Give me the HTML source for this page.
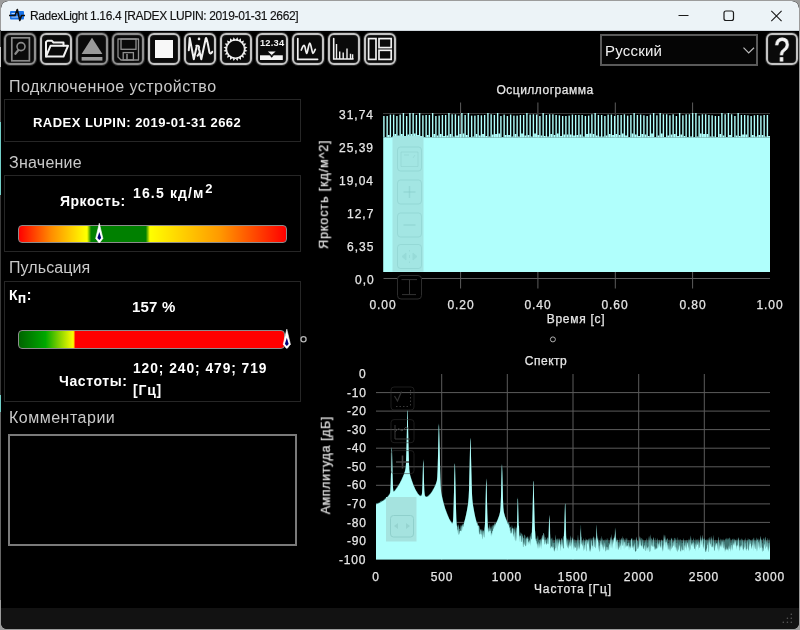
<!DOCTYPE html><html><head><meta charset="utf-8"><style>
*{margin:0;padding:0;box-sizing:border-box}
html,body{width:800px;height:630px;overflow:hidden;background:#9c9c9c;font-family:"Liberation Sans",sans-serif;-webkit-font-smoothing:antialiased}
#win div{will-change:transform}
#win{position:absolute;left:1px;top:1px;width:798px;height:627.5px;background:#000;border-radius:7px 7px 6px 6px;overflow:hidden}
#title{position:absolute;left:0;top:0;width:798px;height:30px;background:#ebf3f8}
.btn{position:absolute;top:33px;width:32px;height:32px;border:2px solid #c4c4c4;border-radius:6px;background:#0a0a0a;box-shadow:0 0 0 1px #2a2a2a, inset 0 0 0 1px #1e1e1e}
.btn.dis{border-color:#8f8f8f}
.box{position:absolute;border:1px solid #262626}
svg{position:absolute;left:0;top:0}
</style></head><body><div style="position:absolute;left:0;top:30px;width:1px;height:17px;background:#444"></div><div style="position:absolute;left:0;top:47px;width:1px;height:20px;background:#c8c8c8"></div><div style="position:absolute;left:0;top:67px;width:1px;height:55px;background:#555"></div><div style="position:absolute;left:0;top:122px;width:1px;height:73px;background:#72cfc8"></div><div style="position:absolute;left:0;top:195px;width:1px;height:200px;background:#3a3a3a"></div><div style="position:absolute;left:0;top:395px;width:1px;height:17px;background:#72cfc8"></div><div style="position:absolute;left:0;top:412px;width:1px;height:188px;background:#666"></div><div id="win">
<div style="position:absolute;left:-1px;top:-1px;width:800px;height:630px">
<div style="position:absolute;left:1px;top:1px;width:798px;height:30px;background:#ecf3f7;border-radius:7px 7px 0 0"></div>
<div style="position:absolute;left:1px;top:30px;width:798px;height:1px;background:#cfd6dc"></div>
<svg width="800" height="40" style="position:absolute;left:0;top:0">
<rect x="10" y="11" width="14" height="8.5" rx="1" fill="#1a73e8"/>
<rect x="11.5" y="13" width="5" height="1" fill="#bcd8ff"/>
<rect x="11.5" y="16.5" width="8" height="1" fill="#bcd8ff"/>
<polyline points="9,15.5 15,15.5 17.3,9.5 19.8,20.5 21.5,15.5 25,15.5" fill="none" stroke="#111" stroke-width="1.6" stroke-linejoin="round"/>
<line x1="678.5" y1="15.5" x2="688.5" y2="15.5" stroke="#1b1b1b" stroke-width="1"/>
<rect x="724" y="11" width="9.5" height="9.5" rx="2" fill="none" stroke="#1b1b1b" stroke-width="1.2"/>
<path d="M771.3 10.9 L781.6 21.1 M781.6 10.9 L771.3 21.1" stroke="#1b1b1b" stroke-width="1.1"/>
</svg>
<div style="position:absolute;top:9.74px;font-size:12px;line-height:12px;color:#111;font-weight:normal;letter-spacing:-0.36px;white-space:nowrap;-webkit-text-stroke:0.15px #111;left:29.6px">RadexLight 1.16.4 [RADEX LUPIN: 2019-01-31 2662]</div>
<div class="btn dis" style="left:4px"></div>
<div class="btn" style="left:40px"></div>
<div class="btn dis" style="left:76px"></div>
<div class="btn dis" style="left:112px"></div>
<div class="btn" style="left:148px"></div>
<div class="btn" style="left:184px"></div>
<div class="btn" style="left:220px"></div>
<div class="btn" style="left:256px"></div>
<div class="btn" style="left:292px"></div>
<div class="btn" style="left:328px"></div>
<div class="btn" style="left:364px"></div>
<svg width="800" height="70" style="position:absolute;left:0;top:0" fill="none" stroke-linecap="round">
<!-- 1 search doc -->
<rect x="11.8" y="37.8" width="17.6" height="23" stroke="#8a8a8a" stroke-width="1.7"/>
<circle cx="21" cy="46.6" r="4" stroke="#8a8a8a" stroke-width="1.6"/>
<line x1="15.4" y1="53.8" x2="18.2" y2="50.2" stroke="#8a8a8a" stroke-width="2.2"/>
<!-- 2 folder -->
<path d="M46 56.5 L46 42 L47.5 40.8 L52 40.8 L53.5 42.5 L63.5 42.5 L63.5 45.5" stroke="#f2f2f2" stroke-width="2" stroke-linejoin="round"/>
<path d="M46 56.5 L50.5 45.8 L68 45.8 L63.5 56.5 Z" stroke="#f2f2f2" stroke-width="2" stroke-linejoin="round"/>
<!-- 3 eject -->
<path d="M92 37.8 L102.4 54 L81.6 54 Z" fill="#9a9a9a"/>
<rect x="81.6" y="57" width="20.8" height="3.6" fill="#9a9a9a"/>
<!-- 4 floppy -->
<path d="M118 39 L138.5 39 L138.5 60 L121 60 L118 57 Z" stroke="#8f8f8f" stroke-width="1.3" stroke-linejoin="round"/>
<rect x="121" y="39" width="15" height="10.3" stroke="#8f8f8f" stroke-width="1.3"/>
<rect x="123.2" y="52.6" width="10.2" height="7.4" stroke="#8f8f8f" stroke-width="1.3"/>
<line x1="127" y1="54.5" x2="127" y2="60" stroke="#8f8f8f" stroke-width="1.5"/>
<!-- 5 stop -->
<rect x="155" y="40" width="18" height="18" fill="#f8f8f8"/>
<!-- 6 wave -->
<path d="M188.8 50.3 L189.7 38 L193.8 59.3 L196.6 47 M196.3 45.8 Q200.2 45 198.7 49.2 Q201.2 52.2 197.6 55.8 M199.6 52 L201.3 59.3 L205.8 38.3 C206.6 36.5 208.3 46 209.4 52.3 C209.9 54 211.4 53.8 212.2 51.8" stroke="#f0f0f0" stroke-width="2" stroke-linejoin="round"/>
<circle cx="199" cy="38.9" r="1.3" fill="#f0f0f0"/>
<!-- 7 sun -->
<circle cx="235.5" cy="49.1" r="9.1" fill="#0a0a0a" stroke="#f0f0f0" stroke-width="1.5"/>
<polygon points="244.80,49.07 247.45,50.99 244.34,52.00" fill="#f0f0f0"/><polygon points="244.35,51.95 246.28,54.59 243.01,54.59" fill="#f0f0f0"/><polygon points="243.04,54.54 244.06,57.66 240.94,56.64" fill="#f0f0f0"/><polygon points="240.99,56.61 240.99,59.88 238.35,57.95" fill="#f0f0f0"/><polygon points="238.40,57.94 237.39,61.05 235.47,58.40" fill="#f0f0f0"/><polygon points="235.53,58.40 233.61,61.05 232.60,57.94" fill="#f0f0f0"/><polygon points="232.65,57.95 230.01,59.88 230.01,56.61" fill="#f0f0f0"/><polygon points="230.06,56.64 226.94,57.66 227.96,54.54" fill="#f0f0f0"/><polygon points="227.99,54.59 224.72,54.59 226.65,51.95" fill="#f0f0f0"/><polygon points="226.66,52.00 223.55,50.99 226.20,49.07" fill="#f0f0f0"/><polygon points="226.20,49.13 223.55,47.21 226.66,46.20" fill="#f0f0f0"/><polygon points="226.65,46.25 224.72,43.61 227.99,43.61" fill="#f0f0f0"/><polygon points="227.96,43.66 226.94,40.54 230.06,41.56" fill="#f0f0f0"/><polygon points="230.01,41.59 230.01,38.32 232.65,40.25" fill="#f0f0f0"/><polygon points="232.60,40.26 233.61,37.15 235.53,39.80" fill="#f0f0f0"/><polygon points="235.47,39.80 237.39,37.15 238.40,40.26" fill="#f0f0f0"/><polygon points="238.35,40.25 240.99,38.32 240.99,41.59" fill="#f0f0f0"/><polygon points="240.94,41.56 244.06,40.54 243.04,43.66" fill="#f0f0f0"/><polygon points="243.01,43.61 246.28,43.61 244.35,46.25" fill="#f0f0f0"/><polygon points="244.34,46.20 247.45,47.21 244.80,49.13" fill="#f0f0f0"/>
<!-- 8 12.34 -->
<rect x="260" y="55.3" width="22.8" height="4.7" fill="#f4f4f4"/>
<path d="M267.8 51.6 L275.6 51.6 L271.7 54.9 Z" fill="#f4f4f4"/>
<path d="M269.6 55.3 L273.8 55.3 L271.7 57.8 Z" fill="#000"/>
<!-- 9 osc -->
<path d="M297.8 38.6 L297.8 59.3 L317.6 59.3" stroke="#f0f0f0" stroke-width="1.7"/>
<path d="M301.3 50 C302.5 47 303.5 44.5 304.5 45.8 C305.5 47 305.8 53.5 306.7 53.4 C307.8 53 308.5 43 309.8 43 C311 43 312 53.4 313 53.4 C314 53.4 314.6 50 315.3 49.3" stroke="#f0f0f0" stroke-width="1.7"/>
<!-- 10 bars -->
<path d="M333.7 38.5 L333.7 59 L353 59" stroke="#f0f0f0" stroke-width="1.6"/>
<path d="M336.5 59 L336.5 44 M339.7 59 L339.7 51.6 M343.2 59 L343.2 52.5 M347 59 L347 48.5 M350.5 59 L350.5 53.8 M352.6 59 L352.6 54.2" stroke="#f0f0f0" stroke-width="1.4" stroke-linecap="butt"/>
<!-- 11 layout -->
<rect x="368.6" y="38.6" width="7.4" height="20.8" stroke="#f0f0f0" stroke-width="1.7"/>
<rect x="379" y="38.6" width="12.2" height="9" stroke="#f0f0f0" stroke-width="1.7"/>
<rect x="379" y="50.3" width="12.2" height="9.1" stroke="#f0f0f0" stroke-width="1.7"/>
</svg>
<div style="position:absolute;top:38.53px;font-size:9.3px;line-height:9.3px;color:#f4f4f4;font-weight:bold;letter-spacing:0.2px;white-space:nowrap;left:260px">12.34</div>
<div style="position:absolute;left:600px;top:33.5px;width:158px;height:31.5px;border:2px solid #5a5a5a;background:#050505"></div>
<div style="position:absolute;top:42.70px;font-size:15px;line-height:15px;color:#f2f2f2;font-weight:normal;letter-spacing:0.2px;white-space:nowrap;left:605.2px">Русский</div>
<svg width="800" height="70" style="position:absolute;left:0;top:0"><path d="M743.5 47.7 L748.7 52.9 L754 47.7" fill="none" stroke="#bbb" stroke-width="1.2"/></svg>
<div class="btn" style="left:766px;width:32px"></div>
<div style="position:absolute;top:32.42px;font-size:34px;line-height:34px;color:#f4f4f4;font-weight:normal;letter-spacing:0px;white-space:nowrap;-webkit-text-stroke:0.9px #f4f4f4;transform:scaleX(0.8);left:481.79999999999995px;width:600px;text-align:center">?</div>
<div style="position:absolute;top:78.76px;font-size:16px;line-height:16px;color:#c9c9c9;font-weight:normal;letter-spacing:0.45px;white-space:nowrap;left:9px">Подключенное устройство</div>
<div class="box" style="left:4px;top:99px;width:297px;height:43px"></div>
<div style="position:absolute;top:115.70px;font-size:13px;line-height:13px;color:#fff;font-weight:bold;letter-spacing:0.47px;white-space:nowrap;left:33px">RADEX LUPIN: 2019-01-31 2662</div>
<div style="position:absolute;top:154.66px;font-size:16px;line-height:16px;color:#c9c9c9;font-weight:normal;letter-spacing:0.25px;white-space:nowrap;left:9px">Значение</div>
<div class="box" style="left:4px;top:175px;width:297px;height:77px"></div>
<div style="position:absolute;top:193.65px;font-size:14px;line-height:14px;color:#fff;font-weight:bold;letter-spacing:0.5px;white-space:nowrap;left:60.3px">Яркость:</div>
<div style="position:absolute;top:186.35px;font-size:14px;line-height:14px;color:#fff;font-weight:bold;letter-spacing:1.15px;white-space:nowrap;left:132.6px">16.5 кд/м<span style='position:relative;top:-5.5px;font-size:13px;margin-left:0.5px'>2</span></div>
<div style="position:absolute;left:17.5px;top:225px;width:269px;height:18px;border:1.5px solid #8c8c8c;border-radius:4px;background:linear-gradient(to right,#ff0000 0%,#ff8c00 12%,#ffff00 25%,#ffff00 25.5%,#008000 27%,#008000 47.5%,#ffff00 49%,#ff9a00 75%,#ff0000 100%)"></div>
<svg width="800" height="630"><path d="M99.3 223.3 L102.89999999999999 238.4 L99.89999999999999 242.4 L98.7 242.4 L95.7 238.4 Z" fill="#fff" stroke="#fff" stroke-width="0.6" stroke-linejoin="round"/><path d="M99.3 231.9 L101.2 238.1 L99.3 240.1 L97.39999999999999 238.1 Z" fill="#00007a"/></svg>
<div style="position:absolute;top:260.46px;font-size:16px;line-height:16px;color:#c9c9c9;font-weight:normal;letter-spacing:0.1px;white-space:nowrap;left:9px">Пульсация</div>
<div class="box" style="left:4px;top:281px;width:297px;height:121px"></div>
<div style="position:absolute;top:288.15px;font-size:14px;line-height:14px;color:#fff;font-weight:bold;letter-spacing:0.3px;white-space:nowrap;left:9px">К<span style='position:relative;top:3px'>п</span>:</div>
<div style="position:absolute;top:298.80px;font-size:15px;line-height:15px;color:#fff;font-weight:bold;letter-spacing:0.2px;white-space:nowrap;left:132.3px">157 %</div>
<div style="position:absolute;left:17.5px;top:330px;width:267px;height:18.5px;border:1.5px solid #8c8c8c;border-radius:4px;background:linear-gradient(to right,#006400 0%,#00a800 10%,#7fd000 15%,#ffff00 20.5%,#ff0000 21.3%,#ff0000 100%)"></div>
<svg width="800" height="630"><path d="M286.8 329.2 L290.40000000000003 344.2 L287.40000000000003 348.2 L286.2 348.2 L283.2 344.2 Z" fill="#fff" stroke="#fff" stroke-width="0.6" stroke-linejoin="round"/><path d="M286.8 337.8 L288.7 343.9 L286.8 345.9 L284.90000000000003 343.9 Z" fill="#00007a"/><circle cx="303.5" cy="339.3" r="2.6" fill="none" stroke="#b5b5b5" stroke-width="1.3"/></svg>
<div style="position:absolute;top:373.65px;font-size:14px;line-height:14px;color:#fff;font-weight:bold;letter-spacing:0.6px;white-space:nowrap;left:59px">Частоты:</div>
<div style="position:absolute;top:362.32px;font-size:13.8px;line-height:13.8px;color:#fff;font-weight:bold;letter-spacing:0.95px;white-space:nowrap;left:132.5px">120; 240; 479; 719</div>
<div style="position:absolute;top:383.15px;font-size:14px;line-height:14px;color:#fff;font-weight:bold;letter-spacing:0.8px;white-space:nowrap;left:132.5px">[Гц]</div>
<div style="position:absolute;top:409.96px;font-size:16px;line-height:16px;color:#c9c9c9;font-weight:normal;letter-spacing:0.5px;white-space:nowrap;left:9px">Комментарии</div>
<div style="position:absolute;left:8px;top:434px;width:289px;height:112px;border:2px solid #7a7a7a"></div>
<div style="position:absolute;left:1px;top:607.5px;width:798px;height:22px;background:#121212"></div>
<svg width="800" height="630"><circle cx="791.3" cy="614.3" r="0.8" fill="#5a5a5a"/><circle cx="787.4" cy="618.3" r="0.8" fill="#5a5a5a"/><circle cx="791.3" cy="618.3" r="0.8" fill="#5a5a5a"/><circle cx="783.3" cy="622.2" r="0.8" fill="#5a5a5a"/><circle cx="787.4" cy="622.2" r="0.8" fill="#5a5a5a"/><circle cx="791.3" cy="622.2" r="0.8" fill="#5a5a5a"/></svg>
<div style="position:absolute;top:84.09px;font-size:12px;line-height:12px;color:#e6e6e6;font-weight:normal;letter-spacing:0.5px;white-space:nowrap;-webkit-text-stroke:0.25px #e6e6e6;left:245.39999999999998px;width:600px;text-align:center">Осциллограмма</div>
<div style="position:absolute;top:108.99px;font-size:12px;line-height:12px;color:#e6e6e6;font-weight:normal;letter-spacing:1.0px;white-space:nowrap;-webkit-text-stroke:0.25px #e6e6e6;right:425.5px">31,74</div>
<div style="position:absolute;top:141.96px;font-size:12px;line-height:12px;color:#e6e6e6;font-weight:normal;letter-spacing:1.0px;white-space:nowrap;-webkit-text-stroke:0.25px #e6e6e6;right:425.5px">25,39</div>
<div style="position:absolute;top:174.93px;font-size:12px;line-height:12px;color:#e6e6e6;font-weight:normal;letter-spacing:1.0px;white-space:nowrap;-webkit-text-stroke:0.25px #e6e6e6;right:425.5px">19,04</div>
<div style="position:absolute;top:207.90px;font-size:12px;line-height:12px;color:#e6e6e6;font-weight:normal;letter-spacing:1.0px;white-space:nowrap;-webkit-text-stroke:0.25px #e6e6e6;right:425.5px">12,7</div>
<div style="position:absolute;top:240.87px;font-size:12px;line-height:12px;color:#e6e6e6;font-weight:normal;letter-spacing:1.0px;white-space:nowrap;-webkit-text-stroke:0.25px #e6e6e6;right:425.5px">6,35</div>
<div style="position:absolute;top:273.84px;font-size:12px;line-height:12px;color:#e6e6e6;font-weight:normal;letter-spacing:1.0px;white-space:nowrap;-webkit-text-stroke:0.25px #e6e6e6;right:425.5px">0,0</div>
<div style="position:absolute;top:298.84px;font-size:12px;line-height:12px;color:#e6e6e6;font-weight:normal;letter-spacing:0.9px;white-space:nowrap;-webkit-text-stroke:0.25px #e6e6e6;left:83.19999999999999px;width:600px;text-align:center">0.00</div>
<div style="position:absolute;top:298.84px;font-size:12px;line-height:12px;color:#e6e6e6;font-weight:normal;letter-spacing:0.9px;white-space:nowrap;-webkit-text-stroke:0.25px #e6e6e6;left:160.56px;width:600px;text-align:center">0.20</div>
<div style="position:absolute;top:298.84px;font-size:12px;line-height:12px;color:#e6e6e6;font-weight:normal;letter-spacing:0.9px;white-space:nowrap;-webkit-text-stroke:0.25px #e6e6e6;left:237.91999999999996px;width:600px;text-align:center">0.40</div>
<div style="position:absolute;top:298.84px;font-size:12px;line-height:12px;color:#e6e6e6;font-weight:normal;letter-spacing:0.9px;white-space:nowrap;-webkit-text-stroke:0.25px #e6e6e6;left:315.28px;width:600px;text-align:center">0.60</div>
<div style="position:absolute;top:298.84px;font-size:12px;line-height:12px;color:#e6e6e6;font-weight:normal;letter-spacing:0.9px;white-space:nowrap;-webkit-text-stroke:0.25px #e6e6e6;left:392.64px;width:600px;text-align:center">0.80</div>
<div style="position:absolute;top:298.84px;font-size:12px;line-height:12px;color:#e6e6e6;font-weight:normal;letter-spacing:0.9px;white-space:nowrap;-webkit-text-stroke:0.25px #e6e6e6;left:470.0px;width:600px;text-align:center">1.00</div>
<div style="position:absolute;top:312.64px;font-size:12px;line-height:12px;color:#e6e6e6;font-weight:normal;letter-spacing:0.72px;white-space:nowrap;-webkit-text-stroke:0.25px #e6e6e6;left:275.70000000000005px;width:600px;text-align:center">Время [с]</div>
<div style="position:absolute;top:188.42px;font-size:12.5px;line-height:12.5px;color:#e6e6e6;font-weight:normal;letter-spacing:0.9px;white-space:nowrap;-webkit-text-stroke:0.25px #e6e6e6;transform:rotate(-90deg);transform-origin:300px 50%;left:23.600000000000023px;width:600px;text-align:center">Яркость [кд/м^2]</div>
<div style="position:absolute;top:354.64px;font-size:12px;line-height:12px;color:#e6e6e6;font-weight:normal;letter-spacing:0.5px;white-space:nowrap;-webkit-text-stroke:0.25px #e6e6e6;left:245.75px;width:600px;text-align:center">Спектр</div>
<div style="position:absolute;top:368.14px;font-size:12px;line-height:12px;color:#e6e6e6;font-weight:normal;letter-spacing:0.8px;white-space:nowrap;-webkit-text-stroke:0.25px #e6e6e6;right:433.5px">0</div>
<div style="position:absolute;top:386.69px;font-size:12px;line-height:12px;color:#e6e6e6;font-weight:normal;letter-spacing:0.8px;white-space:nowrap;-webkit-text-stroke:0.25px #e6e6e6;right:433.5px">-10</div>
<div style="position:absolute;top:405.24px;font-size:12px;line-height:12px;color:#e6e6e6;font-weight:normal;letter-spacing:0.8px;white-space:nowrap;-webkit-text-stroke:0.25px #e6e6e6;right:433.5px">-20</div>
<div style="position:absolute;top:423.79px;font-size:12px;line-height:12px;color:#e6e6e6;font-weight:normal;letter-spacing:0.8px;white-space:nowrap;-webkit-text-stroke:0.25px #e6e6e6;right:433.5px">-30</div>
<div style="position:absolute;top:442.34px;font-size:12px;line-height:12px;color:#e6e6e6;font-weight:normal;letter-spacing:0.8px;white-space:nowrap;-webkit-text-stroke:0.25px #e6e6e6;right:433.5px">-40</div>
<div style="position:absolute;top:460.89px;font-size:12px;line-height:12px;color:#e6e6e6;font-weight:normal;letter-spacing:0.8px;white-space:nowrap;-webkit-text-stroke:0.25px #e6e6e6;right:433.5px">-50</div>
<div style="position:absolute;top:479.44px;font-size:12px;line-height:12px;color:#e6e6e6;font-weight:normal;letter-spacing:0.8px;white-space:nowrap;-webkit-text-stroke:0.25px #e6e6e6;right:433.5px">-60</div>
<div style="position:absolute;top:497.99px;font-size:12px;line-height:12px;color:#e6e6e6;font-weight:normal;letter-spacing:0.8px;white-space:nowrap;-webkit-text-stroke:0.25px #e6e6e6;right:433.5px">-70</div>
<div style="position:absolute;top:516.54px;font-size:12px;line-height:12px;color:#e6e6e6;font-weight:normal;letter-spacing:0.8px;white-space:nowrap;-webkit-text-stroke:0.25px #e6e6e6;right:433.5px">-80</div>
<div style="position:absolute;top:535.09px;font-size:12px;line-height:12px;color:#e6e6e6;font-weight:normal;letter-spacing:0.8px;white-space:nowrap;-webkit-text-stroke:0.25px #e6e6e6;right:433.5px">-90</div>
<div style="position:absolute;top:553.64px;font-size:12px;line-height:12px;color:#e6e6e6;font-weight:normal;letter-spacing:0.8px;white-space:nowrap;-webkit-text-stroke:0.25px #e6e6e6;right:433.5px">-100</div>
<div style="position:absolute;top:570.84px;font-size:12px;line-height:12px;color:#e6e6e6;font-weight:normal;letter-spacing:0.9px;white-space:nowrap;-webkit-text-stroke:0.25px #e6e6e6;left:76.0px;width:600px;text-align:center">0</div>
<div style="position:absolute;top:570.84px;font-size:12px;line-height:12px;color:#e6e6e6;font-weight:normal;letter-spacing:0.9px;white-space:nowrap;-webkit-text-stroke:0.25px #e6e6e6;left:141.66666666666669px;width:600px;text-align:center">500</div>
<div style="position:absolute;top:570.84px;font-size:12px;line-height:12px;color:#e6e6e6;font-weight:normal;letter-spacing:0.9px;white-space:nowrap;-webkit-text-stroke:0.25px #e6e6e6;left:207.33333333333337px;width:600px;text-align:center">1000</div>
<div style="position:absolute;top:570.84px;font-size:12px;line-height:12px;color:#e6e6e6;font-weight:normal;letter-spacing:0.9px;white-space:nowrap;-webkit-text-stroke:0.25px #e6e6e6;left:273.0px;width:600px;text-align:center">1500</div>
<div style="position:absolute;top:570.84px;font-size:12px;line-height:12px;color:#e6e6e6;font-weight:normal;letter-spacing:0.9px;white-space:nowrap;-webkit-text-stroke:0.25px #e6e6e6;left:338.66666666666674px;width:600px;text-align:center">2000</div>
<div style="position:absolute;top:570.84px;font-size:12px;line-height:12px;color:#e6e6e6;font-weight:normal;letter-spacing:0.9px;white-space:nowrap;-webkit-text-stroke:0.25px #e6e6e6;left:404.33333333333326px;width:600px;text-align:center">2500</div>
<div style="position:absolute;top:570.84px;font-size:12px;line-height:12px;color:#e6e6e6;font-weight:normal;letter-spacing:0.9px;white-space:nowrap;-webkit-text-stroke:0.25px #e6e6e6;left:470.0px;width:600px;text-align:center">3000</div>
<div style="position:absolute;top:583.44px;font-size:12px;line-height:12px;color:#e6e6e6;font-weight:normal;letter-spacing:0.84px;white-space:nowrap;-webkit-text-stroke:0.25px #e6e6e6;left:273px;width:600px;text-align:center">Частота [Гц]</div>
<div style="position:absolute;top:459.02px;font-size:12.5px;line-height:12.5px;color:#e6e6e6;font-weight:normal;letter-spacing:0.6px;white-space:nowrap;-webkit-text-stroke:0.25px #e6e6e6;transform:rotate(-90deg);transform-origin:300px 50%;left:26px;width:600px;text-align:center">Амплитуда [дБ]</div>
<svg width="800" height="630" style="position:absolute;left:0;top:0"><line x1="460.6" y1="102.5" x2="460.6" y2="288.5" stroke="#5c5c5c" stroke-width="1"/><line x1="537.9" y1="102.5" x2="537.9" y2="288.5" stroke="#5c5c5c" stroke-width="1"/><line x1="615.3" y1="102.5" x2="615.3" y2="288.5" stroke="#5c5c5c" stroke-width="1"/><line x1="692.6" y1="102.5" x2="692.6" y2="288.5" stroke="#5c5c5c" stroke-width="1"/><line x1="383" y1="113.5" x2="770" y2="113.5" stroke="#3a3a3a" stroke-width="1"/><line x1="383.5" y1="278.5" x2="770" y2="278.5" stroke="#5c5c5c" stroke-width="1"/><rect x="383.2" y="137.5" width="386.8" height="134.5" fill="#b0fffc"/><rect x="383.20" y="116.0" width="1.4" height="21.6" fill="#b0fffc"/><rect x="384.60" y="137.0" width="1.85" height="0.6" fill="#b0fffc"/><rect x="386.45" y="116.0" width="1.4" height="21.6" fill="#b0fffc"/><rect x="387.85" y="135.0" width="1.85" height="2.6" fill="#b0fffc"/><rect x="389.70" y="114.6" width="1.4" height="23.0" fill="#b0fffc"/><rect x="391.10" y="137.0" width="1.85" height="0.6" fill="#b0fffc"/><rect x="392.95" y="114.6" width="1.4" height="23.0" fill="#b0fffc"/><rect x="394.35" y="134.0" width="1.85" height="3.6" fill="#b0fffc"/><rect x="396.20" y="116.0" width="1.4" height="21.6" fill="#b0fffc"/><rect x="397.60" y="135.5" width="1.85" height="2.1" fill="#b0fffc"/><rect x="399.45" y="114.6" width="1.4" height="23.0" fill="#b0fffc"/><rect x="400.85" y="134.0" width="1.85" height="3.6" fill="#b0fffc"/><rect x="402.70" y="113.0" width="1.4" height="24.6" fill="#b0fffc"/><rect x="404.10" y="136.5" width="1.85" height="1.1" fill="#b0fffc"/><rect x="405.95" y="116.0" width="1.4" height="21.6" fill="#b0fffc"/><rect x="407.35" y="134.5" width="1.85" height="3.1" fill="#b0fffc"/><rect x="409.20" y="113.0" width="1.4" height="24.6" fill="#b0fffc"/><rect x="410.60" y="134.0" width="1.85" height="3.6" fill="#b0fffc"/><rect x="412.45" y="113.0" width="1.4" height="24.6" fill="#b0fffc"/><rect x="413.85" y="133.5" width="1.85" height="4.1" fill="#b0fffc"/><rect x="415.70" y="115.0" width="1.4" height="22.6" fill="#b0fffc"/><rect x="417.10" y="135.0" width="1.85" height="2.6" fill="#b0fffc"/><rect x="418.95" y="113.0" width="1.4" height="24.6" fill="#b0fffc"/><rect x="420.35" y="137.0" width="1.85" height="0.6" fill="#b0fffc"/><rect x="422.20" y="115.3" width="1.4" height="22.3" fill="#b0fffc"/><rect x="423.60" y="137.0" width="1.85" height="0.6" fill="#b0fffc"/><rect x="425.45" y="115.0" width="1.4" height="22.6" fill="#b0fffc"/><rect x="426.85" y="135.0" width="1.85" height="2.6" fill="#b0fffc"/><rect x="428.70" y="115.0" width="1.4" height="22.6" fill="#b0fffc"/><rect x="430.10" y="137.0" width="1.85" height="0.6" fill="#b0fffc"/><rect x="431.95" y="113.0" width="1.4" height="24.6" fill="#b0fffc"/><rect x="433.35" y="134.0" width="1.85" height="3.6" fill="#b0fffc"/><rect x="435.20" y="116.0" width="1.4" height="21.6" fill="#b0fffc"/><rect x="436.60" y="135.5" width="1.85" height="2.1" fill="#b0fffc"/><rect x="438.45" y="115.6" width="1.4" height="22.0" fill="#b0fffc"/><rect x="439.85" y="134.0" width="1.85" height="3.6" fill="#b0fffc"/><rect x="441.70" y="115.0" width="1.4" height="22.6" fill="#b0fffc"/><rect x="443.10" y="136.0" width="1.85" height="1.6" fill="#b0fffc"/><rect x="444.95" y="115.0" width="1.4" height="22.6" fill="#b0fffc"/><rect x="446.35" y="135.5" width="1.85" height="2.1" fill="#b0fffc"/><rect x="448.20" y="113.0" width="1.4" height="24.6" fill="#b0fffc"/><rect x="449.60" y="134.0" width="1.85" height="3.6" fill="#b0fffc"/><rect x="451.45" y="114.3" width="1.4" height="23.3" fill="#b0fffc"/><rect x="452.85" y="136.5" width="1.85" height="1.1" fill="#b0fffc"/><rect x="454.70" y="114.3" width="1.4" height="23.3" fill="#b0fffc"/><rect x="456.10" y="135.5" width="1.85" height="2.1" fill="#b0fffc"/><rect x="457.95" y="115.6" width="1.4" height="22.0" fill="#b0fffc"/><rect x="459.35" y="134.0" width="1.85" height="3.6" fill="#b0fffc"/><rect x="461.20" y="113.0" width="1.4" height="24.6" fill="#b0fffc"/><rect x="462.60" y="133.5" width="1.85" height="4.1" fill="#b0fffc"/><rect x="464.45" y="115.0" width="1.4" height="22.6" fill="#b0fffc"/><rect x="465.85" y="135.0" width="1.85" height="2.6" fill="#b0fffc"/><rect x="467.70" y="113.0" width="1.4" height="24.6" fill="#b0fffc"/><rect x="469.10" y="137.0" width="1.85" height="0.6" fill="#b0fffc"/><rect x="470.95" y="115.6" width="1.4" height="22.0" fill="#b0fffc"/><rect x="472.35" y="136.5" width="1.85" height="1.1" fill="#b0fffc"/><rect x="474.20" y="115.6" width="1.4" height="22.0" fill="#b0fffc"/><rect x="475.60" y="134.0" width="1.85" height="3.6" fill="#b0fffc"/><rect x="477.45" y="115.0" width="1.4" height="22.6" fill="#b0fffc"/><rect x="478.85" y="135.5" width="1.85" height="2.1" fill="#b0fffc"/><rect x="480.70" y="115.3" width="1.4" height="22.3" fill="#b0fffc"/><rect x="482.10" y="134.0" width="1.85" height="3.6" fill="#b0fffc"/><rect x="483.95" y="115.0" width="1.4" height="22.6" fill="#b0fffc"/><rect x="485.35" y="136.0" width="1.85" height="1.6" fill="#b0fffc"/><rect x="487.20" y="113.0" width="1.4" height="24.6" fill="#b0fffc"/><rect x="488.60" y="136.5" width="1.85" height="1.1" fill="#b0fffc"/><rect x="490.45" y="114.3" width="1.4" height="23.3" fill="#b0fffc"/><rect x="491.85" y="134.5" width="1.85" height="3.1" fill="#b0fffc"/><rect x="493.70" y="115.0" width="1.4" height="22.6" fill="#b0fffc"/><rect x="495.10" y="134.0" width="1.85" height="3.6" fill="#b0fffc"/><rect x="496.95" y="113.0" width="1.4" height="24.6" fill="#b0fffc"/><rect x="498.35" y="133.5" width="1.85" height="4.1" fill="#b0fffc"/><rect x="500.20" y="116.0" width="1.4" height="21.6" fill="#b0fffc"/><rect x="501.60" y="137.0" width="1.85" height="0.6" fill="#b0fffc"/><rect x="503.45" y="114.6" width="1.4" height="23.0" fill="#b0fffc"/><rect x="504.85" y="135.0" width="1.85" height="2.6" fill="#b0fffc"/><rect x="506.70" y="116.0" width="1.4" height="21.6" fill="#b0fffc"/><rect x="508.10" y="135.0" width="1.85" height="2.6" fill="#b0fffc"/><rect x="509.95" y="114.6" width="1.4" height="23.0" fill="#b0fffc"/><rect x="511.35" y="136.5" width="1.85" height="1.1" fill="#b0fffc"/><rect x="513.20" y="115.6" width="1.4" height="22.0" fill="#b0fffc"/><rect x="514.60" y="134.0" width="1.85" height="3.6" fill="#b0fffc"/><rect x="516.45" y="115.6" width="1.4" height="22.0" fill="#b0fffc"/><rect x="517.85" y="136.5" width="1.85" height="1.1" fill="#b0fffc"/><rect x="519.70" y="115.0" width="1.4" height="22.6" fill="#b0fffc"/><rect x="521.10" y="133.5" width="1.85" height="4.1" fill="#b0fffc"/><rect x="522.95" y="115.0" width="1.4" height="22.6" fill="#b0fffc"/><rect x="524.35" y="135.5" width="1.85" height="2.1" fill="#b0fffc"/><rect x="526.20" y="113.0" width="1.4" height="24.6" fill="#b0fffc"/><rect x="527.60" y="135.0" width="1.85" height="2.6" fill="#b0fffc"/><rect x="529.45" y="114.6" width="1.4" height="23.0" fill="#b0fffc"/><rect x="530.85" y="136.5" width="1.85" height="1.1" fill="#b0fffc"/><rect x="532.70" y="114.3" width="1.4" height="23.3" fill="#b0fffc"/><rect x="534.10" y="133.5" width="1.85" height="4.1" fill="#b0fffc"/><rect x="535.95" y="114.6" width="1.4" height="23.0" fill="#b0fffc"/><rect x="537.35" y="135.0" width="1.85" height="2.6" fill="#b0fffc"/><rect x="539.20" y="116.0" width="1.4" height="21.6" fill="#b0fffc"/><rect x="540.60" y="135.5" width="1.85" height="2.1" fill="#b0fffc"/><rect x="542.45" y="113.0" width="1.4" height="24.6" fill="#b0fffc"/><rect x="543.85" y="136.0" width="1.85" height="1.6" fill="#b0fffc"/><rect x="545.70" y="115.0" width="1.4" height="22.6" fill="#b0fffc"/><rect x="547.10" y="136.5" width="1.85" height="1.1" fill="#b0fffc"/><rect x="548.95" y="114.3" width="1.4" height="23.3" fill="#b0fffc"/><rect x="550.35" y="134.0" width="1.85" height="3.6" fill="#b0fffc"/><rect x="552.20" y="114.3" width="1.4" height="23.3" fill="#b0fffc"/><rect x="553.60" y="135.0" width="1.85" height="2.6" fill="#b0fffc"/><rect x="555.45" y="115.0" width="1.4" height="22.6" fill="#b0fffc"/><rect x="556.85" y="133.5" width="1.85" height="4.1" fill="#b0fffc"/><rect x="558.70" y="115.3" width="1.4" height="22.3" fill="#b0fffc"/><rect x="560.10" y="136.0" width="1.85" height="1.6" fill="#b0fffc"/><rect x="561.95" y="116.0" width="1.4" height="21.6" fill="#b0fffc"/><rect x="563.35" y="134.5" width="1.85" height="3.1" fill="#b0fffc"/><rect x="565.20" y="116.0" width="1.4" height="21.6" fill="#b0fffc"/><rect x="566.60" y="134.5" width="1.85" height="3.1" fill="#b0fffc"/><rect x="568.45" y="115.6" width="1.4" height="22.0" fill="#b0fffc"/><rect x="569.85" y="134.5" width="1.85" height="3.1" fill="#b0fffc"/><rect x="571.70" y="114.6" width="1.4" height="23.0" fill="#b0fffc"/><rect x="573.10" y="135.5" width="1.85" height="2.1" fill="#b0fffc"/><rect x="574.95" y="115.0" width="1.4" height="22.6" fill="#b0fffc"/><rect x="576.35" y="135.0" width="1.85" height="2.6" fill="#b0fffc"/><rect x="578.20" y="115.0" width="1.4" height="22.6" fill="#b0fffc"/><rect x="579.60" y="134.5" width="1.85" height="3.1" fill="#b0fffc"/><rect x="581.45" y="115.0" width="1.4" height="22.6" fill="#b0fffc"/><rect x="582.85" y="136.5" width="1.85" height="1.1" fill="#b0fffc"/><rect x="584.70" y="116.0" width="1.4" height="21.6" fill="#b0fffc"/><rect x="586.10" y="134.0" width="1.85" height="3.6" fill="#b0fffc"/><rect x="587.95" y="115.6" width="1.4" height="22.0" fill="#b0fffc"/><rect x="589.35" y="133.5" width="1.85" height="4.1" fill="#b0fffc"/><rect x="591.20" y="114.3" width="1.4" height="23.3" fill="#b0fffc"/><rect x="592.60" y="134.0" width="1.85" height="3.6" fill="#b0fffc"/><rect x="594.45" y="113.0" width="1.4" height="24.6" fill="#b0fffc"/><rect x="595.85" y="135.5" width="1.85" height="2.1" fill="#b0fffc"/><rect x="597.70" y="115.0" width="1.4" height="22.6" fill="#b0fffc"/><rect x="599.10" y="136.5" width="1.85" height="1.1" fill="#b0fffc"/><rect x="600.95" y="115.0" width="1.4" height="22.6" fill="#b0fffc"/><rect x="602.35" y="136.5" width="1.85" height="1.1" fill="#b0fffc"/><rect x="604.20" y="116.0" width="1.4" height="21.6" fill="#b0fffc"/><rect x="605.60" y="135.5" width="1.85" height="2.1" fill="#b0fffc"/><rect x="607.45" y="114.6" width="1.4" height="23.0" fill="#b0fffc"/><rect x="608.85" y="134.0" width="1.85" height="3.6" fill="#b0fffc"/><rect x="610.70" y="114.6" width="1.4" height="23.0" fill="#b0fffc"/><rect x="612.10" y="135.0" width="1.85" height="2.6" fill="#b0fffc"/><rect x="613.95" y="116.0" width="1.4" height="21.6" fill="#b0fffc"/><rect x="615.35" y="134.0" width="1.85" height="3.6" fill="#b0fffc"/><rect x="617.20" y="115.0" width="1.4" height="22.6" fill="#b0fffc"/><rect x="618.60" y="135.0" width="1.85" height="2.6" fill="#b0fffc"/><rect x="620.45" y="115.0" width="1.4" height="22.6" fill="#b0fffc"/><rect x="621.85" y="133.5" width="1.85" height="4.1" fill="#b0fffc"/><rect x="623.70" y="114.3" width="1.4" height="23.3" fill="#b0fffc"/><rect x="625.10" y="135.5" width="1.85" height="2.1" fill="#b0fffc"/><rect x="626.95" y="115.6" width="1.4" height="22.0" fill="#b0fffc"/><rect x="628.35" y="137.0" width="1.85" height="0.6" fill="#b0fffc"/><rect x="630.20" y="115.0" width="1.4" height="22.6" fill="#b0fffc"/><rect x="631.60" y="133.5" width="1.85" height="4.1" fill="#b0fffc"/><rect x="633.45" y="113.0" width="1.4" height="24.6" fill="#b0fffc"/><rect x="634.85" y="134.5" width="1.85" height="3.1" fill="#b0fffc"/><rect x="636.70" y="115.0" width="1.4" height="22.6" fill="#b0fffc"/><rect x="638.10" y="136.0" width="1.85" height="1.6" fill="#b0fffc"/><rect x="639.95" y="114.6" width="1.4" height="23.0" fill="#b0fffc"/><rect x="641.35" y="134.0" width="1.85" height="3.6" fill="#b0fffc"/><rect x="643.20" y="115.3" width="1.4" height="22.3" fill="#b0fffc"/><rect x="644.60" y="134.5" width="1.85" height="3.1" fill="#b0fffc"/><rect x="646.45" y="116.0" width="1.4" height="21.6" fill="#b0fffc"/><rect x="647.85" y="136.0" width="1.85" height="1.6" fill="#b0fffc"/><rect x="649.70" y="114.6" width="1.4" height="23.0" fill="#b0fffc"/><rect x="651.10" y="133.5" width="1.85" height="4.1" fill="#b0fffc"/><rect x="652.95" y="113.0" width="1.4" height="24.6" fill="#b0fffc"/><rect x="654.35" y="137.0" width="1.85" height="0.6" fill="#b0fffc"/><rect x="656.20" y="115.3" width="1.4" height="22.3" fill="#b0fffc"/><rect x="657.60" y="135.5" width="1.85" height="2.1" fill="#b0fffc"/><rect x="659.45" y="113.0" width="1.4" height="24.6" fill="#b0fffc"/><rect x="660.85" y="133.5" width="1.85" height="4.1" fill="#b0fffc"/><rect x="662.70" y="114.3" width="1.4" height="23.3" fill="#b0fffc"/><rect x="664.10" y="137.0" width="1.85" height="0.6" fill="#b0fffc"/><rect x="665.95" y="114.3" width="1.4" height="23.3" fill="#b0fffc"/><rect x="667.35" y="135.5" width="1.85" height="2.1" fill="#b0fffc"/><rect x="669.20" y="115.3" width="1.4" height="22.3" fill="#b0fffc"/><rect x="670.60" y="134.5" width="1.85" height="3.1" fill="#b0fffc"/><rect x="672.45" y="114.3" width="1.4" height="23.3" fill="#b0fffc"/><rect x="673.85" y="134.0" width="1.85" height="3.6" fill="#b0fffc"/><rect x="675.70" y="116.0" width="1.4" height="21.6" fill="#b0fffc"/><rect x="677.10" y="136.0" width="1.85" height="1.6" fill="#b0fffc"/><rect x="678.95" y="113.0" width="1.4" height="24.6" fill="#b0fffc"/><rect x="680.35" y="134.5" width="1.85" height="3.1" fill="#b0fffc"/><rect x="682.20" y="115.3" width="1.4" height="22.3" fill="#b0fffc"/><rect x="683.60" y="136.0" width="1.85" height="1.6" fill="#b0fffc"/><rect x="685.45" y="114.3" width="1.4" height="23.3" fill="#b0fffc"/><rect x="686.85" y="137.0" width="1.85" height="0.6" fill="#b0fffc"/><rect x="688.70" y="114.3" width="1.4" height="23.3" fill="#b0fffc"/><rect x="690.10" y="136.5" width="1.85" height="1.1" fill="#b0fffc"/><rect x="691.95" y="113.0" width="1.4" height="24.6" fill="#b0fffc"/><rect x="693.35" y="137.0" width="1.85" height="0.6" fill="#b0fffc"/><rect x="695.20" y="113.0" width="1.4" height="24.6" fill="#b0fffc"/><rect x="696.60" y="136.5" width="1.85" height="1.1" fill="#b0fffc"/><rect x="698.45" y="115.6" width="1.4" height="22.0" fill="#b0fffc"/><rect x="699.85" y="133.5" width="1.85" height="4.1" fill="#b0fffc"/><rect x="701.70" y="114.3" width="1.4" height="23.3" fill="#b0fffc"/><rect x="703.10" y="134.0" width="1.85" height="3.6" fill="#b0fffc"/><rect x="704.95" y="114.3" width="1.4" height="23.3" fill="#b0fffc"/><rect x="706.35" y="134.0" width="1.85" height="3.6" fill="#b0fffc"/><rect x="708.20" y="115.0" width="1.4" height="22.6" fill="#b0fffc"/><rect x="709.60" y="136.5" width="1.85" height="1.1" fill="#b0fffc"/><rect x="711.45" y="115.3" width="1.4" height="22.3" fill="#b0fffc"/><rect x="712.85" y="136.5" width="1.85" height="1.1" fill="#b0fffc"/><rect x="714.70" y="116.0" width="1.4" height="21.6" fill="#b0fffc"/><rect x="716.10" y="137.0" width="1.85" height="0.6" fill="#b0fffc"/><rect x="717.95" y="116.0" width="1.4" height="21.6" fill="#b0fffc"/><rect x="719.35" y="134.0" width="1.85" height="3.6" fill="#b0fffc"/><rect x="721.20" y="113.0" width="1.4" height="24.6" fill="#b0fffc"/><rect x="722.60" y="135.5" width="1.85" height="2.1" fill="#b0fffc"/><rect x="724.45" y="114.3" width="1.4" height="23.3" fill="#b0fffc"/><rect x="725.85" y="137.0" width="1.85" height="0.6" fill="#b0fffc"/><rect x="727.70" y="113.0" width="1.4" height="24.6" fill="#b0fffc"/><rect x="729.10" y="135.0" width="1.85" height="2.6" fill="#b0fffc"/><rect x="730.95" y="114.3" width="1.4" height="23.3" fill="#b0fffc"/><rect x="732.35" y="137.0" width="1.85" height="0.6" fill="#b0fffc"/><rect x="734.20" y="116.0" width="1.4" height="21.6" fill="#b0fffc"/><rect x="735.60" y="135.5" width="1.85" height="2.1" fill="#b0fffc"/><rect x="737.45" y="113.0" width="1.4" height="24.6" fill="#b0fffc"/><rect x="738.85" y="136.0" width="1.85" height="1.6" fill="#b0fffc"/><rect x="740.70" y="115.0" width="1.4" height="22.6" fill="#b0fffc"/><rect x="742.10" y="134.5" width="1.85" height="3.1" fill="#b0fffc"/><rect x="743.95" y="115.0" width="1.4" height="22.6" fill="#b0fffc"/><rect x="745.35" y="134.5" width="1.85" height="3.1" fill="#b0fffc"/><rect x="747.20" y="115.3" width="1.4" height="22.3" fill="#b0fffc"/><rect x="748.60" y="137.0" width="1.85" height="0.6" fill="#b0fffc"/><rect x="750.45" y="116.0" width="1.4" height="21.6" fill="#b0fffc"/><rect x="751.85" y="135.0" width="1.85" height="2.6" fill="#b0fffc"/><rect x="753.70" y="115.3" width="1.4" height="22.3" fill="#b0fffc"/><rect x="755.10" y="136.5" width="1.85" height="1.1" fill="#b0fffc"/><rect x="756.95" y="115.0" width="1.4" height="22.6" fill="#b0fffc"/><rect x="758.35" y="135.0" width="1.85" height="2.6" fill="#b0fffc"/><rect x="760.20" y="115.6" width="1.4" height="22.0" fill="#b0fffc"/><rect x="761.60" y="135.0" width="1.85" height="2.6" fill="#b0fffc"/><rect x="763.45" y="115.0" width="1.4" height="22.6" fill="#b0fffc"/><rect x="764.85" y="136.5" width="1.85" height="1.1" fill="#b0fffc"/><rect x="766.70" y="115.0" width="1.4" height="22.6" fill="#b0fffc"/><rect x="768.10" y="136.0" width="1.85" height="1.6" fill="#b0fffc"/><circle cx="552.9" cy="339.4" r="2.5" fill="none" stroke="#b0b0b0" stroke-width="1"/><rect x="392.5" y="136" width="31" height="135.7" fill="#a3e6e3"/><rect x="397.5" y="147" width="24" height="24" rx="3" fill="none" stroke="#7cc0bd" stroke-width="1" opacity="0.35"/><rect x="397.5" y="180" width="24" height="24" rx="3" fill="none" stroke="#7cc0bd" stroke-width="1" opacity="0.35"/><rect x="397.5" y="213" width="24" height="24" rx="3" fill="none" stroke="#7cc0bd" stroke-width="1" opacity="0.35"/><rect x="397.5" y="244.5" width="24" height="24" rx="3" fill="none" stroke="#7cc0bd" stroke-width="1" opacity="0.35"/><line x1="403.5" y1="192" x2="415.5" y2="192" stroke="#86cbc8" stroke-width="1.6" opacity="0.45"/><line x1="409.5" y1="186" x2="409.5" y2="198" stroke="#86cbc8" stroke-width="1.6" opacity="0.45"/><line x1="403.5" y1="225" x2="415.5" y2="225" stroke="#86cbc8" stroke-width="1.6" opacity="0.45"/><path d="M401 166.5 L401 152 L418 152 L418 166.5 Z M404 155 L409 155 M413 158 L415 155" fill="none" stroke="#86cbc8" stroke-width="1" opacity="0.4"/><path d="M402 256.5 L406 253 L406 260 Z M417 256.5 L413 253 L413 260 Z M409.5 250 L409.5 251.5 M409.5 255 L409.5 258 M409.5 261.5 L409.5 263" fill="#86cbc8" stroke="#86cbc8" stroke-width="1" opacity="0.4"/><rect x="397.5" y="275.5" width="24" height="23.5" rx="3.5" fill="#000" stroke="#2c2c2c" stroke-width="1"/><path d="M401.5 279.6 L417 279.6 M409.5 280 L409.5 294.5 M402 294.6 L416 294.6" stroke="#333" stroke-width="1"/><line x1="376" y1="392.6" x2="770" y2="392.6" stroke="#5c5c5c" stroke-width="1"/><line x1="376" y1="411.1" x2="770" y2="411.1" stroke="#5c5c5c" stroke-width="1"/><line x1="376" y1="429.6" x2="770" y2="429.6" stroke="#5c5c5c" stroke-width="1"/><line x1="376" y1="448.2" x2="770" y2="448.2" stroke="#5c5c5c" stroke-width="1"/><line x1="376" y1="466.8" x2="770" y2="466.8" stroke="#5c5c5c" stroke-width="1"/><line x1="376" y1="485.3" x2="770" y2="485.3" stroke="#5c5c5c" stroke-width="1"/><line x1="376" y1="503.9" x2="770" y2="503.9" stroke="#5c5c5c" stroke-width="1"/><line x1="376" y1="522.4" x2="770" y2="522.4" stroke="#5c5c5c" stroke-width="1"/><line x1="376" y1="541.0" x2="770" y2="541.0" stroke="#5c5c5c" stroke-width="1"/><line x1="441.7" y1="374" x2="441.7" y2="560" stroke="#5c5c5c" stroke-width="1"/><line x1="507.3" y1="374" x2="507.3" y2="560" stroke="#5c5c5c" stroke-width="1"/><line x1="573.0" y1="374" x2="573.0" y2="560" stroke="#5c5c5c" stroke-width="1"/><line x1="638.7" y1="374" x2="638.7" y2="560" stroke="#5c5c5c" stroke-width="1"/><line x1="704.3" y1="374" x2="704.3" y2="560" stroke="#5c5c5c" stroke-width="1"/><path d="M376,559.5 L376.00,503.26 L376.33,503.21 L376.67,503.07 L377.00,503.04 L377.33,502.79 L377.67,503.16 L378.00,502.68 L378.33,502.87 L378.67,502.86 L379.00,502.47 L379.33,502.41 L379.67,502.44 L380.00,501.42 L380.33,501.34 L380.67,501.11 L381.00,500.93 L381.33,501.10 L381.67,500.45 L382.00,500.30 L382.33,500.87 L382.67,500.50 L383.00,500.48 L383.33,499.44 L383.67,500.02 L384.00,499.38 L384.33,498.94 L384.67,498.68 L385.00,498.28 L385.33,497.94 L385.67,497.70 L386.00,497.71 L386.33,497.81 L386.67,497.56 L387.00,497.17 L387.33,496.52 L387.67,496.37 L388.00,495.36 L388.33,495.45 L388.67,494.52 L389.00,494.72 L389.33,494.03 L389.67,493.25 L390.00,492.45 L390.33,490.82 L390.67,484.16 L391.00,471.81 L391.33,457.11 L391.67,446.68 L392.00,449.23 L392.33,463.74 L392.67,477.93 L393.00,487.07 L393.33,489.86 L393.67,491.32 L394.00,490.68 L394.33,490.70 L394.67,490.39 L395.00,489.79 L395.33,489.41 L395.67,488.96 L396.00,488.35 L396.33,488.38 L396.67,487.12 L397.00,487.19 L397.33,486.33 L397.67,486.20 L398.00,485.82 L398.33,485.18 L398.67,484.08 L399.00,484.08 L399.33,483.71 L399.67,483.09 L400.00,482.50 L400.33,481.28 L400.67,481.10 L401.00,480.23 L401.33,479.45 L401.67,479.01 L402.00,477.87 L402.33,477.48 L402.67,476.69 L403.00,475.79 L403.33,475.05 L403.67,474.70 L404.00,473.20 L404.33,472.27 L404.67,471.86 L405.00,469.99 L405.33,469.23 L405.67,467.53 L406.00,462.66 L406.33,452.97 L406.67,440.09 L407.00,425.02 L407.33,409.82 L407.67,410.28 L408.00,423.52 L408.33,438.31 L408.67,452.32 L409.00,463.51 L409.33,469.52 L409.67,471.82 L410.00,473.49 L410.33,475.40 L410.67,476.49 L411.00,477.29 L411.33,478.48 L411.67,479.58 L412.00,480.15 L412.33,481.23 L412.67,482.24 L413.00,483.31 L413.33,484.31 L413.67,485.17 L414.00,486.08 L414.33,486.37 L414.67,487.28 L415.00,488.27 L415.33,488.82 L415.67,489.66 L416.00,490.03 L416.33,490.82 L416.67,491.40 L417.00,491.59 L417.33,492.24 L417.67,492.61 L418.00,493.48 L418.33,493.95 L418.67,493.85 L419.00,494.61 L419.33,494.87 L419.67,494.93 L420.00,495.08 L420.33,494.82 L420.67,495.33 L421.00,495.38 L421.33,495.02 L421.67,494.13 L422.00,492.87 L422.33,487.29 L422.67,476.48 L423.00,462.48 L423.33,458.78 L423.67,467.07 L424.00,480.92 L424.33,490.44 L424.67,493.69 L425.00,495.06 L425.33,495.96 L425.67,495.89 L426.00,495.86 L426.33,496.47 L426.67,496.22 L427.00,495.66 L427.33,495.89 L427.67,496.16 L428.00,495.33 L428.33,494.97 L428.67,495.39 L429.00,494.53 L429.33,493.99 L429.67,493.99 L430.00,494.03 L430.33,493.13 L430.67,492.72 L431.00,492.68 L431.33,492.30 L431.67,491.19 L432.00,491.27 L432.33,490.42 L432.67,489.75 L433.00,488.84 L433.33,488.87 L433.67,488.23 L434.00,487.66 L434.33,486.66 L434.67,485.66 L435.00,485.26 L435.33,484.89 L435.67,484.12 L436.00,482.92 L436.33,481.91 L436.67,480.65 L437.00,478.97 L437.33,475.85 L437.67,467.90 L438.00,455.15 L438.33,440.70 L438.67,425.82 L439.00,423.03 L439.33,434.65 L439.67,448.99 L440.00,463.78 L440.33,476.31 L440.67,485.18 L441.00,489.70 L441.33,492.60 L441.67,493.91 L442.00,496.03 L442.33,497.09 L442.67,498.53 L443.00,499.86 L443.33,501.19 L443.67,502.90 L444.00,503.84 L444.33,505.11 L444.67,506.27 L445.00,507.60 L445.33,508.66 L445.67,509.36 L446.00,510.03 L446.33,510.88 L446.67,511.78 L447.00,512.81 L447.33,513.42 L447.67,514.36 L448.00,515.09 L448.33,516.29 L448.67,516.77 L449.00,517.85 L449.33,518.70 L449.67,519.29 L450.00,519.65 L450.33,519.83 L450.67,520.82 L451.00,521.55 L451.33,521.45 L451.67,521.66 L452.00,522.53 L452.33,522.17 L452.67,522.09 L453.00,520.97 L453.33,515.67 L453.67,504.20 L454.00,489.90 L454.33,474.90 L454.67,463.49 L455.00,463.31 L455.33,478.70 L455.67,492.98 L456.00,507.03 L456.33,517.96 L456.67,523.33 L457.00,524.24 L457.33,525.48 L457.67,527.34 L458.00,525.24 L458.33,527.04 L458.67,523.67 L459.00,525.84 L459.33,529.08 L459.67,528.69 L460.00,528.70 L460.33,525.83 L460.67,524.87 L461.00,528.08 L461.33,524.14 L461.67,526.47 L462.00,525.68 L462.33,525.16 L462.67,523.42 L463.00,524.13 L463.33,524.54 L463.67,523.47 L464.00,521.76 L464.33,521.42 L464.67,519.91 L465.00,519.09 L465.33,517.23 L465.67,516.04 L466.00,514.47 L466.33,513.06 L466.67,511.58 L467.00,509.93 L467.33,508.00 L467.67,505.93 L468.00,503.57 L468.33,500.67 L468.67,496.86 L469.00,489.28 L469.33,477.03 L469.67,463.01 L470.00,448.87 L470.33,437.40 L470.67,439.58 L471.00,455.02 L471.33,469.38 L471.67,483.29 L472.00,493.30 L472.33,499.02 L472.67,502.02 L473.00,504.35 L473.33,506.69 L473.67,508.05 L474.00,509.96 L474.33,511.67 L474.67,514.04 L475.00,515.33 L475.33,516.88 L475.67,518.22 L476.00,519.35 L476.33,520.54 L476.67,521.59 L477.00,522.56 L477.33,522.43 L477.67,523.56 L478.00,525.19 L478.33,525.23 L478.67,525.39 L479.00,528.27 L479.33,526.21 L479.67,525.84 L480.00,529.37 L480.33,528.92 L480.67,530.55 L481.00,529.52 L481.33,531.31 L481.67,528.40 L482.00,531.82 L482.33,530.91 L482.67,529.01 L483.00,531.42 L483.33,530.23 L483.67,530.32 L484.00,530.90 L484.33,528.23 L484.67,526.48 L485.00,522.64 L485.33,512.55 L485.67,498.41 L486.00,483.28 L486.33,477.83 L486.67,484.53 L487.00,499.85 L487.33,513.39 L487.67,522.23 L488.00,524.48 L488.33,529.25 L488.67,527.25 L489.00,527.81 L489.33,523.54 L489.67,530.38 L490.00,528.59 L490.33,530.30 L490.67,524.92 L491.00,529.12 L491.33,528.04 L491.67,525.42 L492.00,527.08 L492.33,526.44 L492.67,524.55 L493.00,525.99 L493.33,524.16 L493.67,525.42 L494.00,525.20 L494.33,521.99 L494.67,525.20 L495.00,524.08 L495.33,523.57 L495.67,522.82 L496.00,522.60 L496.33,522.20 L496.67,521.28 L497.00,520.64 L497.33,520.17 L497.67,519.41 L498.00,517.74 L498.33,517.59 L498.67,516.62 L499.00,515.80 L499.33,514.69 L499.67,512.71 L500.00,511.86 L500.33,509.19 L500.67,504.63 L501.00,495.34 L501.33,481.82 L501.67,466.73 L502.00,463.56 L502.33,471.72 L502.67,486.00 L503.00,499.02 L503.33,506.66 L503.67,510.50 L504.00,512.37 L504.33,513.36 L504.67,514.76 L505.00,515.90 L505.33,517.03 L505.67,517.32 L506.00,518.27 L506.33,519.13 L506.67,520.07 L507.00,521.09 L507.33,521.80 L507.67,522.07 L508.00,522.42 L508.33,522.82 L508.67,521.87 L509.00,523.16 L509.33,523.60 L509.67,525.23 L510.00,525.65 L510.33,527.11 L510.67,527.17 L511.00,527.22 L511.33,524.41 L511.67,528.98 L512.00,529.45 L512.33,525.06 L512.67,527.85 L513.00,528.70 L513.33,528.80 L513.67,527.35 L514.00,529.26 L514.33,529.13 L514.67,527.04 L515.00,525.93 L515.33,528.82 L515.67,533.42 L516.00,531.86 L516.33,529.43 L516.67,527.81 L517.00,524.07 L517.33,512.19 L517.67,497.85 L518.00,497.86 L518.33,512.00 L518.67,523.70 L519.00,525.46 L519.33,535.47 L519.67,534.82 L520.00,536.63 L520.33,533.56 L520.67,532.56 L521.00,532.27 L521.33,534.02 L521.67,533.51 L522.00,533.51 L522.33,534.51 L522.67,535.09 L523.00,537.40 L523.33,537.89 L523.67,538.53 L524.00,534.79 L524.33,534.56 L524.67,534.89 L525.00,535.91 L525.33,535.45 L525.67,539.97 L526.00,537.98 L526.33,539.07 L526.67,536.75 L527.00,538.33 L527.33,536.48 L527.67,536.32 L528.00,538.02 L528.33,539.28 L528.67,536.04 L529.00,539.65 L529.33,539.90 L529.67,535.03 L530.00,539.06 L530.33,536.22 L530.67,534.29 L531.00,533.54 L531.33,532.82 L531.67,532.45 L532.00,526.59 L532.33,521.34 L532.67,507.36 L533.00,492.75 L533.33,481.11 L533.67,480.76 L534.00,495.47 L534.33,509.90 L534.67,522.53 L535.00,530.43 L535.33,531.25 L535.67,534.03 L536.00,538.84 L536.33,538.28 L536.67,539.55 L537.00,535.80 L537.33,539.25 L537.67,535.65 L538.00,535.40 L538.33,538.08 L538.67,541.64 L539.00,539.75 L539.33,539.90 L539.67,540.15 L540.00,538.41 L540.33,541.34 L540.67,538.68 L541.00,539.12 L541.33,537.17 L541.67,542.72 L542.00,534.83 L542.33,535.70 L542.67,537.63 L543.00,540.58 L543.33,539.07 L543.67,533.08 L544.00,533.23 L544.33,538.39 L544.67,542.26 L545.00,541.59 L545.33,537.36 L545.67,537.09 L546.00,538.33 L546.33,539.20 L546.67,540.03 L547.00,538.54 L547.33,536.55 L547.67,537.92 L548.00,537.84 L548.33,539.49 L548.67,530.66 L549.00,521.36 L549.33,514.28 L549.67,519.51 L550.00,525.64 L550.33,534.69 L550.67,540.66 L551.00,538.53 L551.33,538.26 L551.67,539.82 L552.00,536.95 L552.33,538.56 L552.67,543.18 L553.00,538.07 L553.33,540.71 L553.67,542.99 L554.00,542.46 L554.33,541.60 L554.67,543.17 L555.00,541.17 L555.33,534.19 L555.67,537.47 L556.00,541.56 L556.33,538.77 L556.67,539.64 L557.00,538.26 L557.33,539.33 L557.67,537.89 L558.00,541.63 L558.33,538.46 L558.67,538.62 L559.00,540.90 L559.33,538.01 L559.67,540.65 L560.00,541.88 L560.33,540.54 L560.67,541.56 L561.00,542.87 L561.33,541.18 L561.67,538.62 L562.00,538.33 L562.33,540.86 L562.67,539.92 L563.00,536.60 L563.33,535.69 L563.67,537.69 L564.00,531.55 L564.33,525.39 L564.67,513.51 L565.00,502.73 L565.33,503.14 L565.67,517.48 L566.00,529.29 L566.33,535.26 L566.67,537.72 L567.00,538.42 L567.33,538.64 L567.67,540.11 L568.00,541.46 L568.33,537.31 L568.67,542.96 L569.00,538.41 L569.33,542.69 L569.67,540.91 L570.00,537.74 L570.33,534.97 L570.67,540.21 L571.00,543.03 L571.33,539.66 L571.67,541.63 L572.00,536.06 L572.33,540.00 L572.67,537.43 L573.00,540.80 L573.33,538.52 L573.67,541.43 L574.00,539.22 L574.33,538.76 L574.67,543.51 L575.00,539.32 L575.33,540.50 L575.67,543.02 L576.00,540.81 L576.33,542.71 L576.67,541.30 L577.00,539.90 L577.33,541.03 L577.67,539.68 L578.00,534.02 L578.33,543.25 L578.67,541.46 L579.00,538.31 L579.33,543.35 L579.67,540.09 L580.00,540.50 L580.33,533.21 L580.67,525.51 L581.00,525.35 L581.33,536.53 L581.67,537.18 L582.00,543.10 L582.33,540.32 L582.67,540.29 L583.00,543.33 L583.33,538.57 L583.67,538.32 L584.00,541.30 L584.33,542.62 L584.67,540.14 L585.00,540.80 L585.33,540.24 L585.67,537.22 L586.00,541.77 L586.33,540.74 L586.67,539.56 L587.00,539.43 L587.33,539.46 L587.67,540.24 L588.00,541.95 L588.33,539.36 L588.67,539.07 L589.00,537.89 L589.33,539.10 L589.67,540.47 L590.00,537.28 L590.33,539.02 L590.67,541.69 L591.00,537.36 L591.33,540.39 L591.67,539.05 L592.00,537.94 L592.33,537.84 L592.67,543.64 L593.00,537.98 L593.33,540.98 L593.67,536.12 L594.00,538.31 L594.33,542.86 L594.67,537.54 L595.00,537.20 L595.33,541.13 L595.67,536.89 L596.00,540.70 L596.33,530.38 L596.67,523.90 L597.00,532.11 L597.33,535.70 L597.67,537.63 L598.00,541.15 L598.33,537.16 L598.67,542.45 L599.00,540.25 L599.33,541.00 L599.67,543.63 L600.00,538.44 L600.33,538.16 L600.67,541.23 L601.00,543.00 L601.33,542.12 L601.67,535.23 L602.00,542.07 L602.33,539.27 L602.67,538.00 L603.00,540.58 L603.33,540.49 L603.67,540.90 L604.00,539.37 L604.33,543.52 L604.67,540.20 L605.00,538.96 L605.33,539.56 L605.67,540.92 L606.00,540.71 L606.33,540.07 L606.67,540.22 L607.00,537.50 L607.33,540.98 L607.67,539.35 L608.00,537.66 L608.33,542.06 L608.67,543.34 L609.00,539.91 L609.33,543.11 L609.67,541.29 L610.00,539.56 L610.33,536.49 L610.67,542.33 L611.00,537.79 L611.33,541.36 L611.67,533.75 L612.00,541.86 L612.33,539.23 L612.67,539.09 L613.00,540.74 L613.33,538.39 L613.67,537.60 L614.00,538.46 L614.33,537.30 L614.67,535.91 L615.00,527.62 L615.33,528.41 L615.67,536.68 L616.00,539.97 L616.33,537.28 L616.67,542.41 L617.00,537.29 L617.33,540.02 L617.67,540.30 L618.00,542.10 L618.33,542.23 L618.67,542.11 L619.00,542.41 L619.33,541.62 L619.67,537.35 L620.00,540.90 L620.33,538.64 L620.67,540.07 L621.00,541.85 L621.33,537.51 L621.67,539.66 L622.00,540.27 L622.33,540.54 L622.67,535.47 L623.00,541.74 L623.33,538.67 L623.67,537.29 L624.00,540.69 L624.33,540.88 L624.67,538.81 L625.00,539.64 L625.33,542.57 L625.67,541.81 L626.00,537.07 L626.33,540.36 L626.67,537.92 L627.00,540.84 L627.33,537.48 L627.67,542.63 L628.00,543.06 L628.33,541.27 L628.67,539.52 L629.00,541.60 L629.33,543.34 L629.67,540.05 L630.00,542.34 L630.33,539.44 L630.67,540.52 L631.00,540.96 L631.33,538.26 L631.67,538.17 L632.00,539.35 L632.33,537.55 L632.67,542.73 L633.00,540.16 L633.33,541.45 L633.67,538.63 L634.00,541.55 L634.33,538.76 L634.67,542.43 L635.00,538.27 L635.33,543.08 L635.67,541.80 L636.00,538.20 L636.33,540.75 L636.67,536.21 L637.00,540.33 L637.33,541.14 L637.67,541.06 L638.00,540.49 L638.33,541.84 L638.67,540.77 L639.00,543.13 L639.33,535.10 L639.67,538.97 L640.00,536.54 L640.33,539.49 L640.67,541.20 L641.00,542.81 L641.33,538.30 L641.67,538.32 L642.00,537.96 L642.33,539.96 L642.67,538.80 L643.00,540.93 L643.33,539.23 L643.67,540.73 L644.00,543.23 L644.33,539.97 L644.67,542.92 L645.00,541.24 L645.33,541.71 L645.67,540.29 L646.00,539.66 L646.33,539.49 L646.67,537.55 L647.00,542.96 L647.33,540.85 L647.67,542.90 L648.00,537.53 L648.33,542.85 L648.67,538.90 L649.00,535.47 L649.33,538.00 L649.67,541.18 L650.00,539.93 L650.33,541.67 L650.67,533.63 L651.00,537.61 L651.33,539.08 L651.67,538.31 L652.00,539.90 L652.33,539.15 L652.67,543.19 L653.00,538.22 L653.33,536.99 L653.67,540.74 L654.00,542.63 L654.33,539.54 L654.67,542.45 L655.00,537.89 L655.33,537.78 L655.67,543.31 L656.00,538.90 L656.33,543.44 L656.67,541.78 L657.00,539.26 L657.33,539.20 L657.67,537.55 L658.00,542.87 L658.33,542.12 L658.67,539.73 L659.00,540.72 L659.33,539.33 L659.67,543.58 L660.00,540.96 L660.33,542.37 L660.67,541.41 L661.00,540.40 L661.33,539.94 L661.67,538.74 L662.00,540.82 L662.33,540.70 L662.67,541.04 L663.00,540.39 L663.33,541.83 L663.67,537.77 L664.00,533.58 L664.33,539.15 L664.67,539.12 L665.00,534.52 L665.33,538.01 L665.67,540.72 L666.00,542.15 L666.33,538.49 L666.67,540.51 L667.00,538.41 L667.33,539.30 L667.67,538.10 L668.00,538.19 L668.33,542.92 L668.67,542.92 L669.00,540.20 L669.33,542.67 L669.67,538.21 L670.00,541.50 L670.33,539.63 L670.67,542.20 L671.00,537.27 L671.33,538.23 L671.67,539.37 L672.00,537.85 L672.33,540.80 L672.67,542.70 L673.00,542.52 L673.33,541.67 L673.67,540.88 L674.00,537.46 L674.33,538.00 L674.67,537.97 L675.00,540.26 L675.33,540.62 L675.67,537.57 L676.00,539.70 L676.33,542.84 L676.67,543.05 L677.00,537.13 L677.33,537.60 L677.67,541.48 L678.00,543.30 L678.33,538.25 L678.67,541.06 L679.00,539.53 L679.33,542.43 L679.67,540.09 L680.00,538.47 L680.33,540.12 L680.67,538.97 L681.00,543.30 L681.33,540.70 L681.67,539.66 L682.00,541.82 L682.33,539.81 L682.67,542.65 L683.00,542.97 L683.33,537.95 L683.67,538.63 L684.00,541.71 L684.33,541.16 L684.67,539.76 L685.00,543.68 L685.33,539.93 L685.67,540.67 L686.00,540.32 L686.33,539.54 L686.67,541.73 L687.00,540.17 L687.33,540.37 L687.67,542.74 L688.00,542.24 L688.33,538.29 L688.67,540.09 L689.00,540.62 L689.33,539.71 L689.67,538.47 L690.00,541.84 L690.33,542.43 L690.67,534.92 L691.00,538.63 L691.33,543.71 L691.67,537.32 L692.00,539.91 L692.33,540.53 L692.67,541.46 L693.00,539.61 L693.33,539.31 L693.67,537.32 L694.00,539.69 L694.33,540.99 L694.67,542.21 L695.00,542.93 L695.33,537.44 L695.67,540.74 L696.00,541.14 L696.33,539.00 L696.67,539.85 L697.00,540.91 L697.33,538.84 L697.67,539.75 L698.00,543.01 L698.33,538.01 L698.67,542.46 L699.00,537.30 L699.33,543.54 L699.67,541.60 L700.00,542.23 L700.33,540.72 L700.67,534.74 L701.00,541.54 L701.33,538.97 L701.67,537.35 L702.00,540.57 L702.33,534.59 L702.67,540.45 L703.00,538.01 L703.33,539.09 L703.67,539.10 L704.00,540.95 L704.33,537.72 L704.67,538.86 L705.00,539.01 L705.33,540.17 L705.67,540.46 L706.00,540.03 L706.33,538.74 L706.67,541.02 L707.00,540.74 L707.33,543.19 L707.67,540.31 L708.00,538.16 L708.33,537.89 L708.67,542.83 L709.00,540.00 L709.33,536.43 L709.67,540.38 L710.00,542.22 L710.33,538.47 L710.67,543.24 L711.00,535.60 L711.33,539.46 L711.67,537.55 L712.00,542.27 L712.33,537.69 L712.67,539.83 L713.00,541.27 L713.33,540.35 L713.67,534.39 L714.00,542.24 L714.33,539.85 L714.67,543.45 L715.00,540.73 L715.33,539.17 L715.67,541.61 L716.00,539.13 L716.33,542.98 L716.67,542.13 L717.00,539.44 L717.33,542.59 L717.67,540.51 L718.00,542.64 L718.33,536.34 L718.67,538.57 L719.00,543.21 L719.33,541.13 L719.67,540.31 L720.00,543.34 L720.33,538.38 L720.67,539.10 L721.00,541.29 L721.33,541.07 L721.67,539.36 L722.00,539.34 L722.33,539.26 L722.67,541.11 L723.00,540.30 L723.33,538.23 L723.67,542.00 L724.00,539.49 L724.33,540.03 L724.67,542.17 L725.00,540.70 L725.33,538.66 L725.67,538.52 L726.00,539.66 L726.33,539.35 L726.67,538.30 L727.00,537.40 L727.33,540.40 L727.67,538.83 L728.00,537.89 L728.33,539.74 L728.67,538.48 L729.00,537.92 L729.33,537.52 L729.67,537.63 L730.00,539.98 L730.33,538.08 L730.67,542.36 L731.00,542.80 L731.33,539.19 L731.67,543.18 L732.00,538.83 L732.33,538.85 L732.67,539.65 L733.00,539.19 L733.33,541.23 L733.67,538.32 L734.00,538.93 L734.33,542.70 L734.67,538.35 L735.00,540.06 L735.33,542.55 L735.67,539.24 L736.00,540.52 L736.33,540.73 L736.67,540.32 L737.00,537.52 L737.33,541.86 L737.67,539.40 L738.00,539.52 L738.33,536.92 L738.67,542.34 L739.00,537.30 L739.33,542.90 L739.67,540.62 L740.00,540.91 L740.33,540.45 L740.67,538.77 L741.00,541.45 L741.33,539.36 L741.67,538.23 L742.00,539.16 L742.33,540.93 L742.67,538.23 L743.00,541.88 L743.33,539.72 L743.67,542.63 L744.00,541.84 L744.33,538.63 L744.67,541.18 L745.00,541.14 L745.33,536.95 L745.67,542.77 L746.00,543.65 L746.33,539.66 L746.67,541.22 L747.00,541.68 L747.33,540.52 L747.67,539.68 L748.00,537.49 L748.33,539.21 L748.67,539.76 L749.00,539.64 L749.33,538.78 L749.67,539.18 L750.00,540.09 L750.33,539.46 L750.67,540.70 L751.00,540.80 L751.33,540.96 L751.67,540.61 L752.00,538.97 L752.33,539.12 L752.67,542.82 L753.00,540.96 L753.33,536.92 L753.67,541.32 L754.00,536.94 L754.33,541.35 L754.67,539.98 L755.00,541.66 L755.33,539.05 L755.67,541.60 L756.00,540.21 L756.33,537.73 L756.67,537.58 L757.00,541.28 L757.33,537.90 L757.67,539.47 L758.00,539.65 L758.33,541.75 L758.67,538.26 L759.00,538.78 L759.33,539.32 L759.67,541.22 L760.00,539.96 L760.33,535.73 L760.67,538.03 L761.00,540.44 L761.33,540.19 L761.67,538.47 L762.00,541.65 L762.33,542.55 L762.67,543.68 L763.00,537.26 L763.33,538.85 L763.67,539.33 L764.00,537.51 L764.33,541.01 L764.67,540.66 L765.00,537.28 L765.33,536.60 L765.67,538.20 L766.00,542.18 L766.33,539.84 L766.67,542.30 L767.00,540.83 L767.33,543.03 L767.67,537.79 L768.00,538.80 L768.33,543.50 L768.67,542.58 L769.00,537.66 L769.33,539.76 L769.67,543.35 L770.00,541.68 L770,559.5 Z" fill="#3d7370"/><path d="M376,559.5 L376.00,504.47 L376.33,504.34 L376.67,504.21 L377.00,504.07 L377.33,503.93 L377.67,503.79 L378.00,503.64 L378.33,503.49 L378.67,503.34 L379.00,503.18 L379.33,503.01 L379.67,502.85 L380.00,502.67 L380.33,502.50 L380.67,502.31 L381.00,502.13 L381.33,501.93 L381.67,501.74 L382.00,501.53 L382.33,501.32 L382.67,501.11 L383.00,500.89 L383.33,500.66 L383.67,500.43 L384.00,500.19 L384.33,499.94 L384.67,499.69 L385.00,499.42 L385.33,499.15 L385.67,498.87 L386.00,498.58 L386.33,498.29 L386.67,497.98 L387.00,497.65 L387.33,497.32 L387.67,496.97 L388.00,496.60 L388.33,496.21 L388.67,495.79 L389.00,495.35 L389.33,494.86 L389.67,494.29 L390.00,493.40 L390.33,491.99 L390.67,485.04 L391.00,472.77 L391.33,458.31 L391.67,447.14 L392.00,449.96 L392.33,464.76 L392.67,478.39 L393.00,487.78 L393.33,491.16 L393.67,491.72 L394.00,491.50 L394.33,491.21 L394.67,490.88 L395.00,490.52 L395.33,490.13 L395.67,489.71 L396.00,489.28 L396.33,488.83 L396.67,488.36 L397.00,487.88 L397.33,487.39 L397.67,486.88 L398.00,486.36 L398.33,485.83 L398.67,485.28 L399.00,484.73 L399.33,484.16 L399.67,483.57 L400.00,482.97 L400.33,482.36 L400.67,481.73 L401.00,481.09 L401.33,480.42 L401.67,479.74 L402.00,479.04 L402.33,478.31 L402.67,477.56 L403.00,476.78 L403.33,475.97 L403.67,475.12 L404.00,474.24 L404.33,473.31 L404.67,472.32 L405.00,471.25 L405.33,469.99 L405.67,468.04 L406.00,463.59 L406.33,454.03 L406.67,440.58 L407.00,425.86 L407.33,410.86 L407.67,410.87 L408.00,424.08 L408.33,438.92 L408.67,452.95 L409.00,464.10 L409.33,470.21 L409.67,472.93 L410.00,474.57 L410.33,475.91 L410.67,477.13 L411.00,478.27 L411.33,479.35 L411.67,480.38 L412.00,481.37 L412.33,482.31 L412.67,483.22 L413.00,484.09 L413.33,484.94 L413.67,485.75 L414.00,486.53 L414.33,487.29 L414.67,488.02 L415.00,488.72 L415.33,489.40 L415.67,490.05 L416.00,490.68 L416.33,491.29 L416.67,491.86 L417.00,492.41 L417.33,492.94 L417.67,493.43 L418.00,493.90 L418.33,494.33 L418.67,494.72 L419.00,495.08 L419.33,495.40 L419.67,495.67 L420.00,495.89 L420.33,496.05 L420.67,496.14 L421.00,496.08 L421.33,495.87 L421.67,495.35 L422.00,493.75 L422.33,488.55 L422.67,477.65 L423.00,463.60 L423.33,459.88 L423.67,468.25 L424.00,481.68 L424.33,490.94 L424.67,494.75 L425.00,495.96 L425.33,496.47 L425.67,496.76 L426.00,496.93 L426.33,497.02 L426.67,497.00 L427.00,496.91 L427.33,496.78 L427.67,496.60 L428.00,496.39 L428.33,496.15 L428.67,495.87 L429.00,495.57 L429.33,495.23 L429.67,494.88 L430.00,494.50 L430.33,494.10 L430.67,493.67 L431.00,493.23 L431.33,492.76 L431.67,492.28 L432.00,491.77 L432.33,491.24 L432.67,490.69 L433.00,490.12 L433.33,489.53 L433.67,488.91 L434.00,488.27 L434.33,487.60 L434.67,486.89 L435.00,486.16 L435.33,485.39 L435.67,484.58 L436.00,483.71 L436.33,482.78 L436.67,481.72 L437.00,480.20 L437.33,476.92 L437.67,469.03 L438.00,456.38 L438.33,441.86 L438.67,426.90 L439.00,423.89 L439.33,435.14 L439.67,450.09 L440.00,464.62 L440.33,477.52 L440.67,486.37 L441.00,490.83 L441.33,493.28 L441.67,495.12 L442.00,496.75 L442.33,498.27 L442.67,499.71 L443.00,501.07 L443.33,502.37 L443.67,503.62 L444.00,504.81 L444.33,505.96 L444.67,507.07 L445.00,508.13 L445.33,509.16 L445.67,510.16 L446.00,511.12 L446.33,512.05 L446.67,512.95 L447.00,513.83 L447.33,514.67 L447.67,515.49 L448.00,516.28 L448.33,517.04 L448.67,517.78 L449.00,518.49 L449.33,519.17 L449.67,519.83 L450.00,520.45 L450.33,521.04 L450.67,521.59 L451.00,522.09 L451.33,522.55 L451.67,522.86 L452.00,523.69 L452.33,522.78 L452.67,523.73 L453.00,521.84 L453.33,516.45 L453.67,505.24 L454.00,491.06 L454.33,476.17 L454.67,464.16 L455.00,464.15 L455.33,479.17 L455.67,494.02 L456.00,508.05 L456.33,519.04 L456.67,525.29 L457.00,526.02 L457.33,530.84 L457.67,529.03 L458.00,533.75 L458.33,535.21 L458.67,523.97 L459.00,532.36 L459.33,534.87 L459.67,531.06 L460.00,531.15 L460.33,530.57 L460.67,530.95 L461.00,530.32 L461.33,524.48 L461.67,531.52 L462.00,530.73 L462.33,526.65 L462.67,524.24 L463.00,526.86 L463.33,526.73 L463.67,524.50 L464.00,523.41 L464.33,522.03 L464.67,520.84 L465.00,519.58 L465.33,518.25 L465.67,516.83 L466.00,515.34 L466.33,513.76 L466.67,512.09 L467.00,510.32 L467.33,508.43 L467.67,506.41 L468.00,504.18 L468.33,501.49 L468.67,497.43 L469.00,489.97 L469.33,478.25 L469.67,464.17 L470.00,449.35 L470.33,438.12 L470.67,440.78 L471.00,455.73 L471.33,470.35 L471.67,483.69 L472.00,493.72 L472.33,499.45 L472.67,502.74 L473.00,505.18 L473.33,507.31 L473.67,509.28 L474.00,511.12 L474.33,512.86 L474.67,514.51 L475.00,516.07 L475.33,517.56 L475.67,518.97 L476.00,520.32 L476.33,521.59 L476.67,522.80 L477.00,523.44 L477.33,523.05 L477.67,525.65 L478.00,525.79 L478.33,525.63 L478.67,525.56 L479.00,533.74 L479.33,534.73 L479.67,533.17 L480.00,531.04 L480.33,528.93 L480.67,533.70 L481.00,534.55 L481.33,534.42 L481.67,528.82 L482.00,538.06 L482.33,539.49 L482.67,529.06 L483.00,537.54 L483.33,530.23 L483.67,532.94 L484.00,537.71 L484.33,536.97 L484.67,528.89 L485.00,523.31 L485.33,513.10 L485.67,499.31 L486.00,484.52 L486.33,478.23 L486.67,485.72 L487.00,500.47 L487.33,514.04 L487.67,524.16 L488.00,530.76 L488.33,532.20 L488.67,527.73 L489.00,533.58 L489.33,523.61 L489.67,531.32 L490.00,531.11 L490.33,531.11 L490.67,526.67 L491.00,536.90 L491.33,533.10 L491.67,533.12 L492.00,534.95 L492.33,530.68 L492.67,530.74 L493.00,531.60 L493.33,525.24 L493.67,528.67 L494.00,528.86 L494.33,522.46 L494.67,526.29 L495.00,526.86 L495.33,524.41 L495.67,524.48 L496.00,523.14 L496.33,522.83 L496.67,522.13 L497.00,521.40 L497.33,520.64 L497.67,519.85 L498.00,519.01 L498.33,518.13 L498.67,517.20 L499.00,516.20 L499.33,515.14 L499.67,513.97 L500.00,512.58 L500.33,510.44 L500.67,505.71 L501.00,495.97 L501.33,482.48 L501.67,467.76 L502.00,464.00 L502.33,472.35 L502.67,486.85 L503.00,499.51 L503.33,507.63 L503.67,511.25 L504.00,513.05 L504.33,514.35 L504.67,515.48 L505.00,516.52 L505.33,517.50 L505.67,518.42 L506.00,519.29 L506.33,520.12 L506.67,520.91 L507.00,521.67 L507.33,522.39 L507.67,523.76 L508.00,524.30 L508.33,525.57 L508.67,522.78 L509.00,526.68 L509.33,528.36 L509.67,526.69 L510.00,531.48 L510.33,529.53 L510.67,533.57 L511.00,533.24 L511.33,533.15 L511.67,530.88 L512.00,534.31 L512.33,528.86 L512.67,527.91 L513.00,528.70 L513.33,537.35 L513.67,535.08 L514.00,533.21 L514.33,529.13 L514.67,540.73 L515.00,525.93 L515.33,535.27 L515.67,540.05 L516.00,541.48 L516.33,537.39 L516.67,527.81 L517.00,527.41 L517.33,513.45 L517.67,498.92 L518.00,498.94 L518.33,512.92 L518.67,525.88 L519.00,525.46 L519.33,535.91 L519.67,536.65 L520.00,542.59 L520.33,534.77 L520.67,536.21 L521.00,536.00 L521.33,539.78 L521.67,542.03 L522.00,541.88 L522.33,535.59 L522.67,536.70 L523.00,547.13 L523.33,546.87 L523.67,541.27 L524.00,545.08 L524.33,544.38 L524.67,541.99 L525.00,536.99 L525.33,545.37 L525.67,545.96 L526.00,546.39 L526.33,543.11 L526.67,536.75 L527.00,539.25 L527.33,538.72 L527.67,536.32 L528.00,545.63 L528.33,540.78 L528.67,542.79 L529.00,541.36 L529.33,540.36 L529.67,544.26 L530.00,539.72 L530.33,546.09 L530.67,535.54 L531.00,538.20 L531.33,539.29 L531.67,539.41 L532.00,530.72 L532.33,522.03 L532.67,508.40 L533.00,493.65 L533.33,481.48 L533.67,481.47 L534.00,496.46 L534.33,511.10 L534.67,524.44 L535.00,530.43 L535.33,538.44 L535.67,539.14 L536.00,541.09 L536.33,540.48 L536.67,542.43 L537.00,544.79 L537.33,542.98 L537.67,548.76 L538.00,541.71 L538.33,542.65 L538.67,545.55 L539.00,549.06 L539.33,542.87 L539.67,544.09 L540.00,548.37 L540.33,543.27 L540.67,538.68 L541.00,546.78 L541.33,537.17 L541.67,549.78 L542.00,534.83 L542.33,535.70 L542.67,538.87 L543.00,540.58 L543.33,539.07 L543.67,533.08 L544.00,533.23 L544.33,538.39 L544.67,544.10 L545.00,544.71 L545.33,539.46 L545.67,540.22 L546.00,544.09 L546.33,542.75 L546.67,545.19 L547.00,544.04 L547.33,543.72 L547.67,537.92 L548.00,543.44 L548.33,544.47 L548.67,536.83 L549.00,522.11 L549.33,515.04 L549.67,519.90 L550.00,532.73 L550.33,543.33 L550.67,548.71 L551.00,547.50 L551.33,547.36 L551.67,546.33 L552.00,545.68 L552.33,548.47 L552.67,546.84 L553.00,540.28 L553.33,546.75 L553.67,547.49 L554.00,551.28 L554.33,551.39 L554.67,548.83 L555.00,551.05 L555.33,534.19 L555.67,548.10 L556.00,548.53 L556.33,543.76 L556.67,539.64 L557.00,551.53 L557.33,548.36 L557.67,539.26 L558.00,543.67 L558.33,541.38 L558.67,547.01 L559.00,542.67 L559.33,538.01 L559.67,540.65 L560.00,544.46 L560.33,544.20 L560.67,551.44 L561.00,542.95 L561.33,547.18 L561.67,538.62 L562.00,538.57 L562.33,547.18 L562.67,541.54 L563.00,548.34 L563.33,548.41 L563.67,548.24 L564.00,534.57 L564.33,528.66 L564.67,514.80 L565.00,503.83 L565.33,504.25 L565.67,518.76 L566.00,537.19 L566.33,546.61 L566.67,541.92 L567.00,538.42 L567.33,543.60 L567.67,547.96 L568.00,546.57 L568.33,544.00 L568.67,548.96 L569.00,547.27 L569.33,544.92 L569.67,540.91 L570.00,545.11 L570.33,534.97 L570.67,546.81 L571.00,545.29 L571.33,541.47 L571.67,550.33 L572.00,536.06 L572.33,540.00 L572.67,537.43 L573.00,546.42 L573.33,538.52 L573.67,546.70 L574.00,550.09 L574.33,545.34 L574.67,548.22 L575.00,539.32 L575.33,548.34 L575.67,546.99 L576.00,547.88 L576.33,542.71 L576.67,550.76 L577.00,550.92 L577.33,549.05 L577.67,545.80 L578.00,534.02 L578.33,545.35 L578.67,549.80 L579.00,543.35 L579.33,546.68 L579.67,549.63 L580.00,546.46 L580.33,541.47 L580.67,527.93 L581.00,533.17 L581.33,541.71 L581.67,544.06 L582.00,544.63 L582.33,546.21 L582.67,540.29 L583.00,547.85 L583.33,551.58 L583.67,538.32 L584.00,545.42 L584.33,544.40 L584.67,550.62 L585.00,546.10 L585.33,540.24 L585.67,541.81 L586.00,549.93 L586.33,551.75 L586.67,539.56 L587.00,539.43 L587.33,541.79 L587.67,544.85 L588.00,541.95 L588.33,539.36 L588.67,546.13 L589.00,539.14 L589.33,551.64 L589.67,550.26 L590.00,546.03 L590.33,551.96 L590.67,550.25 L591.00,548.17 L591.33,540.39 L591.67,540.84 L592.00,546.55 L592.33,546.07 L592.67,544.80 L593.00,549.77 L593.33,541.32 L593.67,536.12 L594.00,538.31 L594.33,547.05 L594.67,546.83 L595.00,537.20 L595.33,544.56 L595.67,548.47 L596.00,547.61 L596.33,536.99 L596.67,524.02 L597.00,535.33 L597.33,540.88 L597.67,537.63 L598.00,541.15 L598.33,543.22 L598.67,550.26 L599.00,545.02 L599.33,546.13 L599.67,551.30 L600.00,551.82 L600.33,540.42 L600.67,541.23 L601.00,545.19 L601.33,543.63 L601.67,535.23 L602.00,549.52 L602.33,542.87 L602.67,547.78 L603.00,544.05 L603.33,550.14 L603.67,547.20 L604.00,539.37 L604.33,545.67 L604.67,547.57 L605.00,541.63 L605.33,547.41 L605.67,551.87 L606.00,550.75 L606.33,550.08 L606.67,546.27 L607.00,547.20 L607.33,546.98 L607.67,550.62 L608.00,549.33 L608.33,550.16 L608.67,545.08 L609.00,551.31 L609.33,543.31 L609.67,545.24 L610.00,542.80 L610.33,536.49 L610.67,542.80 L611.00,548.47 L611.33,542.05 L611.67,533.75 L612.00,548.90 L612.33,545.11 L612.67,539.17 L613.00,544.90 L613.33,538.39 L613.67,542.88 L614.00,538.46 L614.33,538.23 L614.67,536.80 L615.00,533.74 L615.33,528.41 L615.67,537.51 L616.00,550.20 L616.33,540.33 L616.67,542.47 L617.00,539.43 L617.33,540.02 L617.67,544.40 L618.00,550.07 L618.33,545.08 L618.67,550.32 L619.00,548.44 L619.33,541.62 L619.67,548.20 L620.00,546.25 L620.33,545.30 L620.67,542.55 L621.00,550.92 L621.33,537.51 L621.67,539.66 L622.00,544.79 L622.33,546.30 L622.67,535.47 L623.00,546.09 L623.33,541.88 L623.67,537.29 L624.00,550.28 L624.33,542.23 L624.67,541.54 L625.00,543.36 L625.33,548.34 L625.67,543.53 L626.00,537.07 L626.33,544.81 L626.67,546.55 L627.00,546.40 L627.33,545.68 L627.67,544.68 L628.00,547.55 L628.33,542.39 L628.67,543.33 L629.00,550.73 L629.33,545.32 L629.67,547.65 L630.00,544.95 L630.33,548.55 L630.67,545.60 L631.00,549.37 L631.33,539.99 L631.67,538.17 L632.00,539.35 L632.33,548.33 L632.67,546.90 L633.00,545.19 L633.33,550.41 L633.67,544.85 L634.00,547.49 L634.33,542.70 L634.67,545.09 L635.00,551.41 L635.33,551.42 L635.67,551.60 L636.00,551.37 L636.33,550.42 L636.67,536.21 L637.00,540.33 L637.33,546.09 L637.67,549.00 L638.00,548.83 L638.33,543.83 L638.67,549.34 L639.00,546.17 L639.33,535.10 L639.67,547.66 L640.00,536.54 L640.33,540.17 L640.67,543.84 L641.00,546.23 L641.33,545.42 L641.67,545.24 L642.00,547.93 L642.33,545.54 L642.67,539.77 L643.00,546.00 L643.33,549.27 L643.67,549.04 L644.00,546.88 L644.33,544.48 L644.67,546.09 L645.00,550.73 L645.33,551.09 L645.67,545.72 L646.00,539.66 L646.33,549.89 L646.67,544.73 L647.00,551.34 L647.33,548.01 L647.67,547.77 L648.00,546.42 L648.33,546.58 L648.67,550.79 L649.00,535.47 L649.33,541.17 L649.67,551.64 L650.00,551.73 L650.33,550.60 L650.67,533.63 L651.00,549.07 L651.33,540.25 L651.67,545.26 L652.00,545.99 L652.33,547.11 L652.67,544.45 L653.00,539.17 L653.33,536.99 L653.67,545.98 L654.00,547.61 L654.33,545.18 L654.67,548.48 L655.00,550.52 L655.33,547.97 L655.67,549.73 L656.00,546.56 L656.33,549.43 L656.67,547.80 L657.00,548.99 L657.33,547.54 L657.67,539.78 L658.00,544.69 L658.33,543.34 L658.67,548.11 L659.00,542.74 L659.33,539.33 L659.67,546.63 L660.00,542.64 L660.33,547.91 L660.67,545.39 L661.00,548.50 L661.33,540.90 L661.67,540.10 L662.00,548.40 L662.33,552.05 L662.67,544.44 L663.00,551.15 L663.33,546.97 L663.67,544.26 L664.00,533.58 L664.33,545.36 L664.67,539.12 L665.00,534.52 L665.33,542.03 L665.67,542.79 L666.00,548.26 L666.33,540.06 L666.67,542.32 L667.00,542.39 L667.33,544.48 L667.67,545.64 L668.00,550.31 L668.33,543.65 L668.67,548.81 L669.00,550.11 L669.33,542.67 L669.67,551.15 L670.00,548.30 L670.33,551.70 L670.67,544.80 L671.00,547.92 L671.33,549.51 L671.67,539.37 L672.00,538.36 L672.33,547.74 L672.67,547.39 L673.00,545.50 L673.33,545.91 L673.67,542.61 L674.00,540.60 L674.33,540.59 L674.67,544.75 L675.00,547.96 L675.33,546.47 L675.67,537.57 L676.00,551.17 L676.33,546.73 L676.67,551.28 L677.00,537.13 L677.33,547.52 L677.67,551.91 L678.00,551.07 L678.33,543.35 L678.67,550.51 L679.00,549.11 L679.33,544.38 L679.67,546.68 L680.00,540.76 L680.33,550.83 L680.67,551.80 L681.00,550.24 L681.33,545.43 L681.67,552.07 L682.00,541.82 L682.33,551.34 L682.67,549.17 L683.00,550.28 L683.33,549.89 L683.67,538.91 L684.00,541.85 L684.33,551.92 L684.67,544.98 L685.00,545.95 L685.33,540.94 L685.67,546.26 L686.00,548.18 L686.33,539.54 L686.67,550.53 L687.00,545.47 L687.33,542.32 L687.67,542.74 L688.00,545.76 L688.33,548.47 L688.67,540.09 L689.00,551.71 L689.33,549.17 L689.67,539.02 L690.00,550.43 L690.33,548.01 L690.67,534.92 L691.00,543.73 L691.33,546.01 L691.67,544.36 L692.00,542.25 L692.33,543.35 L692.67,544.09 L693.00,547.35 L693.33,541.57 L693.67,542.77 L694.00,547.57 L694.33,549.16 L694.67,548.85 L695.00,543.27 L695.33,545.34 L695.67,551.30 L696.00,541.14 L696.33,547.50 L696.67,545.37 L697.00,540.91 L697.33,544.56 L697.67,545.21 L698.00,543.01 L698.33,550.13 L698.67,542.46 L699.00,540.76 L699.33,545.30 L699.67,547.71 L700.00,547.97 L700.33,540.72 L700.67,534.74 L701.00,541.54 L701.33,539.61 L701.67,545.52 L702.00,540.57 L702.33,534.59 L702.67,540.45 L703.00,547.75 L703.33,542.21 L703.67,549.34 L704.00,546.47 L704.33,537.72 L704.67,540.10 L705.00,549.84 L705.33,550.81 L705.67,551.93 L706.00,551.95 L706.33,550.42 L706.67,548.41 L707.00,548.53 L707.33,544.29 L707.67,545.36 L708.00,538.16 L708.33,543.29 L708.67,552.03 L709.00,551.59 L709.33,536.43 L709.67,541.19 L710.00,543.85 L710.33,543.76 L710.67,546.25 L711.00,535.60 L711.33,539.46 L711.67,547.48 L712.00,546.47 L712.33,547.16 L712.67,544.78 L713.00,548.52 L713.33,545.09 L713.67,534.39 L714.00,549.54 L714.33,551.08 L714.67,550.28 L715.00,540.73 L715.33,548.71 L715.67,543.15 L716.00,546.56 L716.33,542.98 L716.67,543.20 L717.00,544.56 L717.33,550.12 L717.67,544.91 L718.00,542.65 L718.33,536.34 L718.67,548.46 L719.00,551.69 L719.33,541.13 L719.67,550.28 L720.00,543.49 L720.33,545.32 L720.67,545.98 L721.00,547.42 L721.33,541.07 L721.67,545.26 L722.00,548.13 L722.33,542.24 L722.67,541.11 L723.00,547.22 L723.33,548.70 L723.67,544.71 L724.00,539.49 L724.33,552.02 L724.67,543.49 L725.00,549.57 L725.33,549.22 L725.67,551.72 L726.00,546.18 L726.33,548.75 L726.67,550.35 L727.00,547.45 L727.33,549.62 L727.67,549.26 L728.00,550.83 L728.33,545.05 L728.67,551.74 L729.00,545.27 L729.33,548.38 L729.67,549.19 L730.00,539.98 L730.33,548.42 L730.67,551.64 L731.00,545.20 L731.33,544.93 L731.67,549.98 L732.00,538.83 L732.33,550.74 L732.67,547.89 L733.00,541.13 L733.33,545.67 L733.67,542.47 L734.00,545.84 L734.33,542.74 L734.67,538.35 L735.00,546.52 L735.33,542.55 L735.67,539.24 L736.00,542.74 L736.33,549.87 L736.67,545.08 L737.00,546.81 L737.33,545.29 L737.67,545.20 L738.00,540.13 L738.33,536.92 L738.67,542.76 L739.00,548.07 L739.33,545.02 L739.67,550.13 L740.00,550.65 L740.33,545.11 L740.67,547.54 L741.00,545.56 L741.33,545.26 L741.67,548.14 L742.00,539.16 L742.33,541.85 L742.67,550.51 L743.00,545.22 L743.33,551.37 L743.67,548.63 L744.00,549.43 L744.33,538.63 L744.67,547.73 L745.00,547.51 L745.33,536.95 L745.67,550.48 L746.00,545.09 L746.33,551.45 L746.67,548.81 L747.00,549.43 L747.33,547.74 L747.67,539.68 L748.00,542.99 L748.33,548.88 L748.67,550.73 L749.00,550.19 L749.33,538.78 L749.67,543.63 L750.00,547.03 L750.33,539.46 L750.67,543.74 L751.00,543.77 L751.33,548.94 L751.67,545.87 L752.00,549.71 L752.33,539.12 L752.67,544.85 L753.00,546.04 L753.33,536.92 L753.67,551.19 L754.00,536.94 L754.33,548.69 L754.67,545.18 L755.00,542.37 L755.33,548.38 L755.67,549.18 L756.00,540.21 L756.33,541.10 L756.67,548.57 L757.00,551.80 L757.33,547.67 L757.67,539.90 L758.00,539.65 L758.33,548.34 L758.67,542.20 L759.00,542.23 L759.33,549.96 L759.67,545.20 L760.00,539.96 L760.33,535.73 L760.67,547.60 L761.00,548.31 L761.33,545.74 L761.67,538.47 L762.00,551.49 L762.33,551.62 L762.67,547.74 L763.00,547.60 L763.33,550.68 L763.67,550.93 L764.00,539.14 L764.33,547.28 L764.67,544.11 L765.00,544.73 L765.33,536.60 L765.67,548.76 L766.00,548.35 L766.33,539.84 L766.67,547.51 L767.00,545.92 L767.33,550.52 L767.67,537.79 L768.00,547.04 L768.33,552.00 L768.67,549.26 L769.00,539.66 L769.33,543.50 L769.67,549.03 L770.00,543.64 L770,559.5 Z" fill="#b0fffc"/><rect x="391" y="387" width="23" height="23.0" rx="3" fill="none" stroke="#333" stroke-width="1" opacity="0.55"/><rect x="391" y="419.6" width="23" height="23.1" rx="3" fill="none" stroke="#333" stroke-width="1" opacity="0.55"/><rect x="391" y="450.6" width="23" height="23.0" rx="3" fill="none" stroke="#333" stroke-width="1" opacity="0.55"/><path d="M394.5 396 L397.5 401 L401.5 391.5" fill="none" stroke="#333" stroke-width="1.2"/><path d="M410.5 390 L410.5 407 M396 406.5 L410 406.5" fill="none" stroke="#3a3a3a" stroke-width="1" stroke-dasharray="1.5 2"/><path d="M395 425 L395 439 L410 439 M395 432 L398.5 428.5 L402 431 L406 427 L410 430" fill="none" stroke="#3a3a3a" stroke-width="1"/><path d="M396 462 L409 462 M402.5 455.5 L402.5 468.5" fill="none" stroke="#444" stroke-width="1.6"/><rect x="386" y="497" width="30.5" height="44.5" fill="#a5e3df"/><rect x="390.5" y="515.5" width="23" height="21.5" rx="3" fill="none" stroke="#8fd0cc" stroke-width="1"/><path d="M394 526 L398 523 L398 529 Z M410 526 L406 523 L406 529 Z" fill="#96d4d0"/></svg>
</div></div></body></html>
